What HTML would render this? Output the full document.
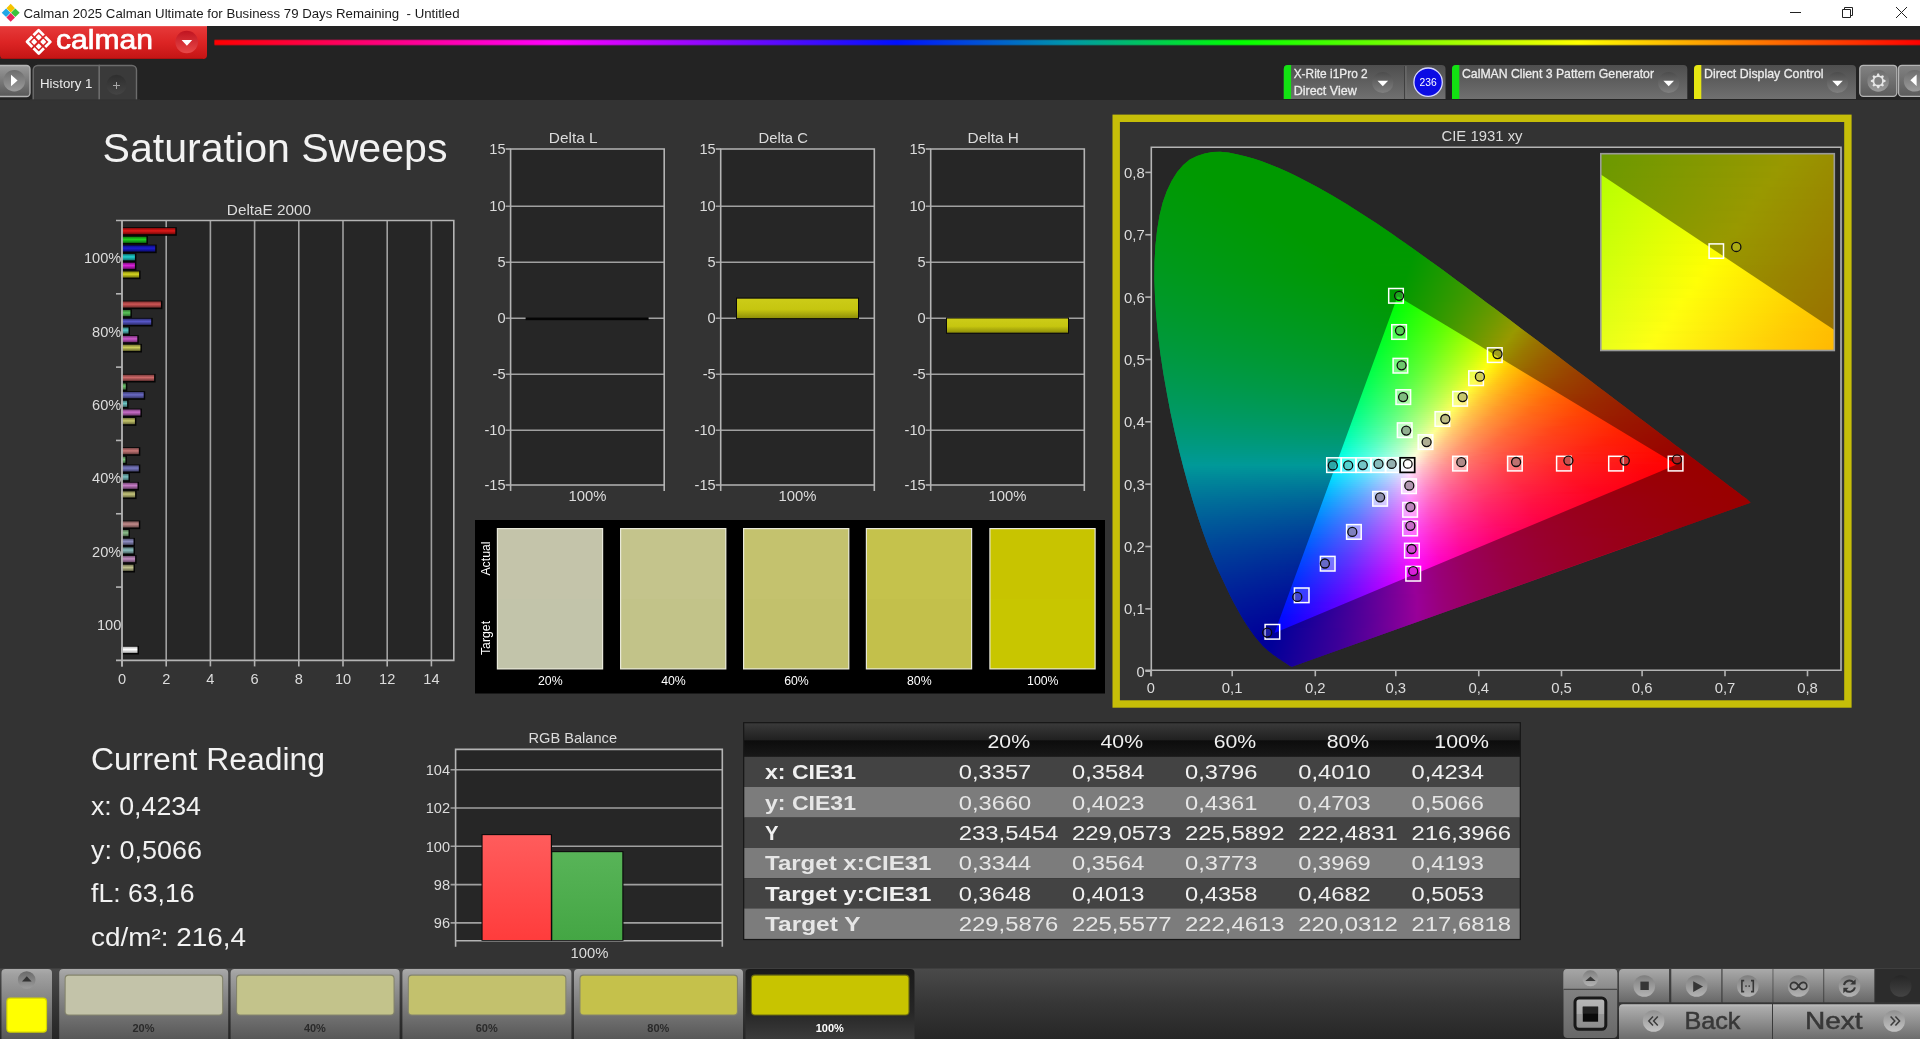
<!DOCTYPE html>
<html><head><meta charset="utf-8"><title>Calman</title>
<style>
html,body{margin:0;padding:0;background:#333;overflow:hidden}
body{width:1920px;height:1039px;position:relative;font-family:"Liberation Sans", sans-serif}
svg{position:absolute;left:0;top:0;will-change:transform}
svg text{font-family:"Liberation Sans", sans-serif}
#cie{position:absolute;overflow:hidden}
#cie i{display:block}
</style></head><body>
<svg width="1920" height="1039" viewBox="0 0 1920 1039">
<defs>
<linearGradient id="gRed" x1="0" y1="0" x2="0" y2="1"><stop offset="0" stop-color="#e63a3a"/><stop offset=".5" stop-color="#dc2424"/><stop offset="1" stop-color="#c41414"/></linearGradient>
<linearGradient id="gRain" x1="0" y1="0" x2="1" y2="0"><stop offset="0" stop-color="#ff0000"/><stop offset=".2" stop-color="#ff00ff"/><stop offset=".4" stop-color="#0010ff"/><stop offset=".5" stop-color="#0096aa"/><stop offset=".6" stop-color="#00ff00"/><stop offset=".8" stop-color="#ffff00"/><stop offset="1" stop-color="#ff0000"/></linearGradient>
<linearGradient id="gBtn" x1="0" y1="0" x2="0" y2="1"><stop offset="0" stop-color="#9a9a9a"/><stop offset="1" stop-color="#585858"/></linearGradient>
<linearGradient id="gBtn2" x1="0" y1="0" x2="0" y2="1"><stop offset="0" stop-color="#828282"/><stop offset="1" stop-color="#5c5c5c"/></linearGradient>
<linearGradient id="gCirc" x1="0" y1="0" x2="0" y2="1"><stop offset="0" stop-color="#4c4c4c"/><stop offset="1" stop-color="#808080"/></linearGradient>
<linearGradient id="gCircL" x1="0" y1="0" x2="0" y2="1"><stop offset="0" stop-color="#6c6c6c"/><stop offset="1" stop-color="#9c9c9c"/></linearGradient>
<linearGradient id="gDev" x1="0" y1="0" x2="0" y2="1"><stop offset="0" stop-color="#4e4e4e"/><stop offset="1" stop-color="#707070"/></linearGradient>
<linearGradient id="gRedC" x1="0" y1="0" x2="0" y2="1"><stop offset="0" stop-color="#c01420"/><stop offset="1" stop-color="#e84848"/></linearGradient>
<linearGradient id="gTabC" x1="0" y1="0" x2="0" y2="1"><stop offset="0" stop-color="#2e2e2e"/><stop offset="1" stop-color="#444"/></linearGradient>
</defs>
<rect x="0" y="0" width="1920" height="26" fill="#fff"/>
<rect x="0" y="26" width="1920" height="74" fill="#232323"/>
<rect x="0" y="100" width="1920" height="870" fill="#333"/>
<g transform="translate(10.7,12.8)"><path d="M0,-9 L4.3,-4.6 L0,-0.3 L-4.3,-4.6Z" fill="#f5c400"/><path d="M-9,0 L-4.6,-4.3 L-0.3,0 L-4.6,4.3Z" fill="#22a8e8"/><path d="M9,0 L4.6,-4.3 L0.3,0 L4.6,4.3Z" fill="#3cc23c"/><path d="M0,9 L4.3,4.6 L0,0.3 L-4.3,4.6Z" fill="#e8285c"/></g>
<text x="23.5" y="17.6" font-size="12.6" fill="#1a1a1a" textLength="436" lengthAdjust="spacingAndGlyphs" xml:space="preserve">Calman 2025 Calman Ultimate for Business 79 Days Remaining  - Untitled</text>
<g stroke="#222" stroke-width="1" fill="none"><path d="M1790,12.5h11"/><path d="M1842.5,9.5h8v8h-8z"/><path d="M1844.5,9.5v-2h8v8h-2"/><path d="M1896,7l11,11M1907,7l-11,11"/></g>
<path d="M0,26H207V55a4,4 0 0 1 -4,4H4a4,4 0 0 1 -4,-4Z" fill="url(#gRed)"/>
<path d="M0,58.5H203" stroke="#9a1010" stroke-width="1" opacity=".6"/>
<rect x="0" y="26" width="207" height="1" fill="#f06060" opacity=".7"/>
<g transform="translate(38.7,41.8) rotate(45)"><rect x="-5.40" y="-5.40" width="4.40" height="4.40" rx=".6" fill="#fff"/><path d="M-8.30,-0.90V-8.20H-0.90" fill="none" stroke="#fff" stroke-width="2.8" stroke-linejoin="round"/><rect x="-5.40" y="1.00" width="4.40" height="4.40" rx=".6" fill="#fff"/><path d="M-8.30,0.90V8.20H-0.90" fill="none" stroke="#fff" stroke-width="2.8" stroke-linejoin="round"/><rect x="1.00" y="-5.40" width="4.40" height="4.40" rx=".6" fill="#fff"/><path d="M8.30,-0.90V-8.20H0.90" fill="none" stroke="#fff" stroke-width="2.8" stroke-linejoin="round"/><rect x="1.00" y="1.00" width="4.40" height="4.40" rx=".6" fill="#fff"/><path d="M8.30,0.90V8.20H0.90" fill="none" stroke="#fff" stroke-width="2.8" stroke-linejoin="round"/></g>
<text x="56" y="49.2" font-size="28.5" fill="#fff" textLength="97" lengthAdjust="spacingAndGlyphs" stroke="#fff" stroke-width=".7">calman</text>
<circle cx="186.7" cy="42" r="11.3" fill="url(#gRedC)"/>
<path d="M181.6,40h10.6l-5.3,5.8z" fill="#fff"/>
<rect x="214.5" y="39.5" width="1705.5" height="6" fill="url(#gRain)" opacity=".55"/>
<rect x="214.5" y="40.3" width="1705.5" height="4.4" fill="url(#gRain)"/>
<rect x="-4" y="65.5" width="34" height="31" rx="3.5" fill="url(#gBtn)" stroke="#b4b4b4" stroke-width="1.3"/>
<circle cx="14.3" cy="80.7" r="10.8" fill="url(#gCircL)"/>
<path d="M11,74.8v11.4l6.6,-5.7z" fill="#fff"/>
<path d="M33.2,100V70a4.5,4.5 0 0 1 4.5,-4.5H99.3V100" fill="#3d3d3d" stroke="#6c6c6c" stroke-width="1.4"/>
<path d="M99.3,100V65.5H132a4.5,4.5 0 0 1 4.5,4.5V100" fill="#3a3a3a" stroke="#6c6c6c" stroke-width="1.4"/>
<rect x="30" y="99.3" width="110" height="1" fill="#333"/>
<text x="40" y="87.6" font-size="13.2" fill="#ececec" textLength="52.5" lengthAdjust="spacingAndGlyphs">History 1</text>
<circle cx="116.5" cy="84.7" r="10" fill="url(#gTabC)"/>
<path d="M113,85.5h7M116.5,82v7" stroke="#a8a8a8" stroke-width="1"/>
<path d="M1283.8,99V69a4,4 0 0 1 4,-4H1441.5a4,4 0 0 1 4,4V99Z" fill="url(#gDev)"/><path d="M1283.8,99V69a4,4 0 0 1 4,-4H1291.1V99Z" fill="#12e212"/>
<path d="M1452,99V69a4,4 0 0 1 4,-4H1683.3a4,4 0 0 1 4,4V99Z" fill="url(#gDev)"/><path d="M1452,99V69a4,4 0 0 1 4,-4H1459.3V99Z" fill="#12e212"/>
<path d="M1694,99V69a4,4 0 0 1 4,-4H1852a4,4 0 0 1 4,4V99Z" fill="url(#gDev)"/><path d="M1694,99V69a4,4 0 0 1 4,-4H1701.3V99Z" fill="#e6e612"/>
<circle cx="1382.8" cy="82.5" r="10.6" fill="url(#gCirc)"/><path d="M1377.5,80.7h10.6l-5.3,5.6z" fill="#fff"/>
<circle cx="1668.7" cy="82.5" r="10.6" fill="url(#gCirc)"/><path d="M1663.4,80.7h10.6l-5.3,5.6z" fill="#fff"/>
<circle cx="1837.5" cy="82.5" r="10.6" fill="url(#gCirc)"/><path d="M1832.2,80.7h10.6l-5.3,5.6z" fill="#fff"/>
<line x1="1404.7" y1="66" x2="1404.7" y2="99" stroke="#3c3c3c" stroke-width="1.2"/>
<line x1="1405.9" y1="66" x2="1405.9" y2="99" stroke="#777" stroke-width="1"/>
<circle cx="1428.1" cy="82.2" r="14.2" fill="#0b0be4" stroke="#d8d8ff" stroke-width="1.3"/>
<text x="1428.1" y="86" font-size="10.5" fill="#fff" text-anchor="middle" textLength="17.2" lengthAdjust="spacingAndGlyphs">236</text>
<text x="1293.7" y="77.9" font-size="13" fill="#ececec" textLength="74" lengthAdjust="spacingAndGlyphs" stroke="#ececec" stroke-width=".3">X-Rite i1Pro 2</text>
<text x="1293.7" y="94.5" font-size="13" fill="#ececec" textLength="63" lengthAdjust="spacingAndGlyphs" stroke="#ececec" stroke-width=".3">Direct View</text>
<text x="1462" y="77.9" font-size="13" fill="#ececec" textLength="192" lengthAdjust="spacingAndGlyphs" stroke="#ececec" stroke-width=".3">CalMAN Client 3 Pattern Generator</text>
<text x="1704" y="77.9" font-size="13" fill="#ececec" textLength="119.5" lengthAdjust="spacingAndGlyphs" stroke="#ececec" stroke-width=".3">Direct Display Control</text>
<rect x="1859.8" y="65.3" width="37" height="31" rx="3.5" fill="url(#gBtn2)" stroke="#b4b4b4" stroke-width="1.3"/>
<circle cx="1878.2" cy="80.9" r="10.8" fill="url(#gCircL)"/>
<polygon points="1885.56,80.17 1885.56,81.63 1883.46,82.50 1883.05,83.49 1883.92,85.59 1882.89,86.62 1880.79,85.75 1879.80,86.16 1878.93,88.26 1877.47,88.26 1876.60,86.16 1875.61,85.75 1873.51,86.62 1872.48,85.59 1873.35,83.49 1872.94,82.50 1870.84,81.63 1870.84,80.17 1872.94,79.30 1873.35,78.31 1872.48,76.21 1873.51,75.18 1875.61,76.05 1876.60,75.64 1877.47,73.54 1878.93,73.54 1879.80,75.64 1880.79,76.05 1882.89,75.18 1883.92,76.21 1883.05,78.31 1883.46,79.30" fill="#e6e6e6"/>
<circle cx="1878.2" cy="80.9" r="3.9" fill="#808080"/>
<circle cx="1878.2" cy="80.9" r="3.9" fill="none" stroke="#666" stroke-width="1" opacity=".0"/>
<rect x="1898.5" y="65.3" width="30" height="31" rx="3.5" fill="url(#gBtn2)" stroke="#b4b4b4" stroke-width="1.3"/>
<circle cx="1914.6" cy="80.8" r="10.8" fill="url(#gCircL)"/>
<path d="M1916.6,74.6v11.4l-6.2,-5.7z" fill="#fff"/>
<defs><linearGradient id="b00" x1="0" y1="0" x2="0" y2="1"><stop offset="0" stop-color="#850909"/><stop offset=".45" stop-color="#df1818"/><stop offset="1" stop-color="#760808"/></linearGradient><linearGradient id="b01" x1="0" y1="0" x2="0" y2="1"><stop offset="0" stop-color="#0e7c0e"/><stop offset=".45" stop-color="#20d020"/><stop offset="1" stop-color="#0d6e0d"/></linearGradient><linearGradient id="b02" x1="0" y1="0" x2="0" y2="1"><stop offset="0" stop-color="#0c0c7c"/><stop offset=".45" stop-color="#1c1cd0"/><stop offset="1" stop-color="#0b0b6e"/></linearGradient><linearGradient id="b03" x1="0" y1="0" x2="0" y2="1"><stop offset="0" stop-color="#0e7c7c"/><stop offset=".45" stop-color="#20d0d0"/><stop offset="1" stop-color="#0d6e6e"/></linearGradient><linearGradient id="b04" x1="0" y1="0" x2="0" y2="1"><stop offset="0" stop-color="#800e80"/><stop offset=".45" stop-color="#d820d8"/><stop offset="1" stop-color="#720d72"/></linearGradient><linearGradient id="b05" x1="0" y1="0" x2="0" y2="1"><stop offset="0" stop-color="#7f7f0e"/><stop offset=".45" stop-color="#d6d620"/><stop offset="1" stop-color="#71710d"/></linearGradient><linearGradient id="b10" x1="0" y1="0" x2="0" y2="1"><stop offset="0" stop-color="#7c2f2f"/><stop offset=".45" stop-color="#d05555"/><stop offset="1" stop-color="#6e2a2a"/></linearGradient><linearGradient id="b11" x1="0" y1="0" x2="0" y2="1"><stop offset="0" stop-color="#327632"/><stop offset=".45" stop-color="#5ac75a"/><stop offset="1" stop-color="#2d692d"/></linearGradient><linearGradient id="b12" x1="0" y1="0" x2="0" y2="1"><stop offset="0" stop-color="#303076"/><stop offset=".45" stop-color="#5757c7"/><stop offset="1" stop-color="#2b2b69"/></linearGradient><linearGradient id="b13" x1="0" y1="0" x2="0" y2="1"><stop offset="0" stop-color="#327676"/><stop offset=".45" stop-color="#5ac7c7"/><stop offset="1" stop-color="#2d6969"/></linearGradient><linearGradient id="b14" x1="0" y1="0" x2="0" y2="1"><stop offset="0" stop-color="#793279"/><stop offset=".45" stop-color="#cc5acc"/><stop offset="1" stop-color="#6b2d6b"/></linearGradient><linearGradient id="b15" x1="0" y1="0" x2="0" y2="1"><stop offset="0" stop-color="#787832"/><stop offset=".45" stop-color="#cbcb5a"/><stop offset="1" stop-color="#6b6b2d"/></linearGradient><linearGradient id="b20" x1="0" y1="0" x2="0" y2="1"><stop offset="0" stop-color="#793b3b"/><stop offset=".45" stop-color="#cc6868"/><stop offset="1" stop-color="#6b3434"/></linearGradient><linearGradient id="b21" x1="0" y1="0" x2="0" y2="1"><stop offset="0" stop-color="#3e743e"/><stop offset=".45" stop-color="#6cc46c"/><stop offset="1" stop-color="#376737"/></linearGradient><linearGradient id="b22" x1="0" y1="0" x2="0" y2="1"><stop offset="0" stop-color="#3c3c74"/><stop offset=".45" stop-color="#6a6ac4"/><stop offset="1" stop-color="#353567"/></linearGradient><linearGradient id="b23" x1="0" y1="0" x2="0" y2="1"><stop offset="0" stop-color="#3e7474"/><stop offset=".45" stop-color="#6cc4c4"/><stop offset="1" stop-color="#376767"/></linearGradient><linearGradient id="b24" x1="0" y1="0" x2="0" y2="1"><stop offset="0" stop-color="#773e77"/><stop offset=".45" stop-color="#c86cc8"/><stop offset="1" stop-color="#693769"/></linearGradient><linearGradient id="b25" x1="0" y1="0" x2="0" y2="1"><stop offset="0" stop-color="#76763e"/><stop offset=".45" stop-color="#c7c76c"/><stop offset="1" stop-color="#696937"/></linearGradient><linearGradient id="b30" x1="0" y1="0" x2="0" y2="1"><stop offset="0" stop-color="#774545"/><stop offset=".45" stop-color="#c87878"/><stop offset="1" stop-color="#693d3d"/></linearGradient><linearGradient id="b31" x1="0" y1="0" x2="0" y2="1"><stop offset="0" stop-color="#477347"/><stop offset=".45" stop-color="#7bc27b"/><stop offset="1" stop-color="#3f663f"/></linearGradient><linearGradient id="b32" x1="0" y1="0" x2="0" y2="1"><stop offset="0" stop-color="#464673"/><stop offset=".45" stop-color="#7a7ac2"/><stop offset="1" stop-color="#3e3e66"/></linearGradient><linearGradient id="b33" x1="0" y1="0" x2="0" y2="1"><stop offset="0" stop-color="#477373"/><stop offset=".45" stop-color="#7bc2c2"/><stop offset="1" stop-color="#3f6666"/></linearGradient><linearGradient id="b34" x1="0" y1="0" x2="0" y2="1"><stop offset="0" stop-color="#754775"/><stop offset=".45" stop-color="#c57bc5"/><stop offset="1" stop-color="#673f67"/></linearGradient><linearGradient id="b35" x1="0" y1="0" x2="0" y2="1"><stop offset="0" stop-color="#747447"/><stop offset=".45" stop-color="#c4c47b"/><stop offset="1" stop-color="#67673f"/></linearGradient><linearGradient id="b40" x1="0" y1="0" x2="0" y2="1"><stop offset="0" stop-color="#735151"/><stop offset=".45" stop-color="#c38b8b"/><stop offset="1" stop-color="#664848"/></linearGradient><linearGradient id="b41" x1="0" y1="0" x2="0" y2="1"><stop offset="0" stop-color="#527152"/><stop offset=".45" stop-color="#8dbf8d"/><stop offset="1" stop-color="#496449"/></linearGradient><linearGradient id="b42" x1="0" y1="0" x2="0" y2="1"><stop offset="0" stop-color="#515171"/><stop offset=".45" stop-color="#8c8cbf"/><stop offset="1" stop-color="#484864"/></linearGradient><linearGradient id="b43" x1="0" y1="0" x2="0" y2="1"><stop offset="0" stop-color="#527171"/><stop offset=".45" stop-color="#8dbfbf"/><stop offset="1" stop-color="#496464"/></linearGradient><linearGradient id="b44" x1="0" y1="0" x2="0" y2="1"><stop offset="0" stop-color="#725272"/><stop offset=".45" stop-color="#c18dc1"/><stop offset="1" stop-color="#654965"/></linearGradient><linearGradient id="b45" x1="0" y1="0" x2="0" y2="1"><stop offset="0" stop-color="#727252"/><stop offset=".45" stop-color="#c0c08d"/><stop offset="1" stop-color="#656549"/></linearGradient><linearGradient id="bw" x1="0" y1="0" x2="0" y2="1"><stop offset="0" stop-color="#bbb"/><stop offset=".45" stop-color="#fff"/><stop offset="1" stop-color="#aaa"/></linearGradient></defs><rect x="122.0" y="220.5" width="331.8" height="439.9" fill="#262626"/>
<line x1="166.2" y1="220.5" x2="166.2" y2="660.4" stroke="#a0a0a0" stroke-width="1.6"/>
<line x1="210.4" y1="220.5" x2="210.4" y2="660.4" stroke="#a0a0a0" stroke-width="1.6"/>
<line x1="254.60000000000002" y1="220.5" x2="254.60000000000002" y2="660.4" stroke="#a0a0a0" stroke-width="1.6"/>
<line x1="298.8" y1="220.5" x2="298.8" y2="660.4" stroke="#a0a0a0" stroke-width="1.6"/>
<line x1="343.0" y1="220.5" x2="343.0" y2="660.4" stroke="#a0a0a0" stroke-width="1.6"/>
<line x1="387.20000000000005" y1="220.5" x2="387.20000000000005" y2="660.4" stroke="#a0a0a0" stroke-width="1.6"/>
<line x1="431.40000000000003" y1="220.5" x2="431.40000000000003" y2="660.4" stroke="#a0a0a0" stroke-width="1.6"/>
<path d="M116.0,220.5H453.8V660.4H116.0" fill="none" stroke="#b4b4b4" stroke-width="1.6"/>
<line x1="116.0" y1="293.81666666666666" x2="122.0" y2="293.81666666666666" stroke="#b4b4b4" stroke-width="1.6"/>
<line x1="116.0" y1="367.1333333333333" x2="122.0" y2="367.1333333333333" stroke="#b4b4b4" stroke-width="1.6"/>
<line x1="116.0" y1="440.45" x2="122.0" y2="440.45" stroke="#b4b4b4" stroke-width="1.6"/>
<line x1="116.0" y1="513.7666666666667" x2="122.0" y2="513.7666666666667" stroke="#b4b4b4" stroke-width="1.6"/>
<line x1="116.0" y1="587.0833333333333" x2="122.0" y2="587.0833333333333" stroke="#b4b4b4" stroke-width="1.6"/>
<line x1="122.0" y1="660.4" x2="122.0" y2="666.4" stroke="#b4b4b4" stroke-width="1.6"/>
<text x="122.0" y="683.6" font-size="14.6" fill="#dcdcdc" text-anchor="middle">0</text>
<line x1="166.2" y1="660.4" x2="166.2" y2="666.4" stroke="#b4b4b4" stroke-width="1.6"/>
<text x="166.2" y="683.6" font-size="14.6" fill="#dcdcdc" text-anchor="middle">2</text>
<line x1="210.4" y1="660.4" x2="210.4" y2="666.4" stroke="#b4b4b4" stroke-width="1.6"/>
<text x="210.4" y="683.6" font-size="14.6" fill="#dcdcdc" text-anchor="middle">4</text>
<line x1="254.60000000000002" y1="660.4" x2="254.60000000000002" y2="666.4" stroke="#b4b4b4" stroke-width="1.6"/>
<text x="254.60000000000002" y="683.6" font-size="14.6" fill="#dcdcdc" text-anchor="middle">6</text>
<line x1="298.8" y1="660.4" x2="298.8" y2="666.4" stroke="#b4b4b4" stroke-width="1.6"/>
<text x="298.8" y="683.6" font-size="14.6" fill="#dcdcdc" text-anchor="middle">8</text>
<line x1="343.0" y1="660.4" x2="343.0" y2="666.4" stroke="#b4b4b4" stroke-width="1.6"/>
<text x="343.0" y="683.6" font-size="14.6" fill="#dcdcdc" text-anchor="middle">10</text>
<line x1="387.20000000000005" y1="660.4" x2="387.20000000000005" y2="666.4" stroke="#b4b4b4" stroke-width="1.6"/>
<text x="387.20000000000005" y="683.6" font-size="14.6" fill="#dcdcdc" text-anchor="middle">12</text>
<line x1="431.40000000000003" y1="660.4" x2="431.40000000000003" y2="666.4" stroke="#b4b4b4" stroke-width="1.6"/>
<text x="431.40000000000003" y="683.6" font-size="14.6" fill="#dcdcdc" text-anchor="middle">14</text>
<text x="269" y="214.9" font-size="14.6" fill="#dcdcdc" text-anchor="middle" textLength="84.3" lengthAdjust="spacingAndGlyphs">DeltaE 2000</text>
<text x="121.3" y="263.3583333333333" font-size="14.6" fill="#dcdcdc" text-anchor="end">100%</text>
<rect x="121.5" y="227.2" width="55.3" height="8.6" fill="#050505"/>
<rect x="121.0" y="228.0" width="54.3" height="6.2" fill="url(#b00)"/>
<rect x="121.5" y="235.9" width="26.4" height="8.6" fill="#050505"/>
<rect x="121.0" y="236.7" width="25.4" height="6.2" fill="url(#b01)"/>
<rect x="121.5" y="244.6" width="35.2" height="8.6" fill="#050505"/>
<rect x="121.0" y="245.4" width="34.2" height="6.2" fill="url(#b02)"/>
<rect x="121.5" y="253.3" width="14.9" height="8.6" fill="#050505"/>
<rect x="121.0" y="254.1" width="13.9" height="6.2" fill="url(#b03)"/>
<rect x="121.5" y="261.9" width="14.9" height="8.6" fill="#050505"/>
<rect x="121.0" y="262.7" width="13.9" height="6.2" fill="url(#b04)"/>
<rect x="121.5" y="270.6" width="19.1" height="8.6" fill="#050505"/>
<rect x="121.0" y="271.4" width="18.1" height="6.2" fill="url(#b05)"/>
<text x="121.3" y="336.675" font-size="14.6" fill="#dcdcdc" text-anchor="end">80%</text>
<rect x="121.5" y="300.6" width="40.9" height="8.6" fill="#050505"/>
<rect x="121.0" y="301.4" width="39.9" height="6.2" fill="url(#b10)"/>
<rect x="121.5" y="309.2" width="10.4" height="8.6" fill="#050505"/>
<rect x="121.0" y="310.0" width="9.4" height="6.2" fill="url(#b11)"/>
<rect x="121.5" y="317.9" width="31.2" height="8.6" fill="#050505"/>
<rect x="121.0" y="318.7" width="30.2" height="6.2" fill="url(#b12)"/>
<rect x="121.5" y="326.6" width="8.5" height="8.6" fill="#050505"/>
<rect x="121.0" y="327.4" width="7.5" height="6.2" fill="url(#b13)"/>
<rect x="121.5" y="335.2" width="17.3" height="8.6" fill="#050505"/>
<rect x="121.0" y="336.0" width="16.3" height="6.2" fill="url(#b14)"/>
<rect x="121.5" y="343.9" width="20.4" height="8.6" fill="#050505"/>
<rect x="121.0" y="344.7" width="19.4" height="6.2" fill="url(#b15)"/>
<text x="121.3" y="409.9916666666666" font-size="14.6" fill="#dcdcdc" text-anchor="end">60%</text>
<rect x="121.5" y="373.9" width="34.1" height="8.6" fill="#050505"/>
<rect x="121.0" y="374.7" width="33.1" height="6.2" fill="url(#b20)"/>
<rect x="121.5" y="382.6" width="5.8" height="8.6" fill="#050505"/>
<rect x="121.0" y="383.4" width="4.8" height="6.2" fill="url(#b21)"/>
<rect x="121.5" y="391.2" width="23.7" height="8.6" fill="#050505"/>
<rect x="121.0" y="392.0" width="22.7" height="6.2" fill="url(#b22)"/>
<rect x="121.5" y="399.9" width="7.1" height="8.6" fill="#050505"/>
<rect x="121.0" y="400.7" width="6.1" height="6.2" fill="url(#b23)"/>
<rect x="121.5" y="408.6" width="20.4" height="8.6" fill="#050505"/>
<rect x="121.0" y="409.4" width="19.4" height="6.2" fill="url(#b24)"/>
<rect x="121.5" y="417.2" width="14.9" height="8.6" fill="#050505"/>
<rect x="121.0" y="418.0" width="13.9" height="6.2" fill="url(#b25)"/>
<text x="121.3" y="483.30833333333334" font-size="14.6" fill="#dcdcdc" text-anchor="end">40%</text>
<rect x="121.5" y="447.2" width="18.8" height="8.6" fill="#050505"/>
<rect x="121.0" y="448.0" width="17.8" height="6.2" fill="url(#b30)"/>
<rect x="121.5" y="455.9" width="5.4" height="8.6" fill="#050505"/>
<rect x="121.0" y="456.7" width="4.4" height="6.2" fill="url(#b31)"/>
<rect x="121.5" y="464.5" width="18.8" height="8.6" fill="#050505"/>
<rect x="121.0" y="465.3" width="17.8" height="6.2" fill="url(#b32)"/>
<rect x="121.5" y="473.2" width="8.5" height="8.6" fill="#050505"/>
<rect x="121.0" y="474.0" width="7.5" height="6.2" fill="url(#b33)"/>
<rect x="121.5" y="481.9" width="17.5" height="8.6" fill="#050505"/>
<rect x="121.0" y="482.7" width="16.5" height="6.2" fill="url(#b34)"/>
<rect x="121.5" y="490.5" width="15.1" height="8.6" fill="#050505"/>
<rect x="121.0" y="491.3" width="14.1" height="6.2" fill="url(#b35)"/>
<text x="121.3" y="556.625" font-size="14.6" fill="#dcdcdc" text-anchor="end">20%</text>
<rect x="121.5" y="520.5" width="18.8" height="8.6" fill="#050505"/>
<rect x="121.0" y="521.3" width="17.8" height="6.2" fill="url(#b40)"/>
<rect x="121.5" y="529.2" width="8.5" height="8.6" fill="#050505"/>
<rect x="121.0" y="530.0" width="7.5" height="6.2" fill="url(#b41)"/>
<rect x="121.5" y="537.9" width="13.5" height="8.6" fill="#050505"/>
<rect x="121.0" y="538.7" width="12.5" height="6.2" fill="url(#b42)"/>
<rect x="121.5" y="546.5" width="13.5" height="8.6" fill="#050505"/>
<rect x="121.0" y="547.3" width="12.5" height="6.2" fill="url(#b43)"/>
<rect x="121.5" y="555.2" width="15.1" height="8.6" fill="#050505"/>
<rect x="121.0" y="556.0" width="14.1" height="6.2" fill="url(#b44)"/>
<rect x="121.5" y="563.9" width="13.5" height="8.6" fill="#050505"/>
<rect x="121.0" y="564.7" width="12.5" height="6.2" fill="url(#b45)"/>
<text x="121.3" y="629.9416666666667" font-size="14.6" fill="#dcdcdc" text-anchor="end">100</text>
<rect x="121.5" y="645.9" width="17.5" height="8.6" fill="#050505"/>
<rect x="121.0" y="646.7" width="16.5" height="6.2" fill="url(#bw)"/>
<line x1="122.0" y1="220.5" x2="122.0" y2="666.4" stroke="#b4b4b4" stroke-width="1.8"/>
<text x="102.5" y="161.5" font-size="41.5" fill="#f2f2f2" textLength="345" lengthAdjust="spacingAndGlyphs">Saturation Sweeps</text>
<text x="91" y="770" font-size="31" fill="#f2f2f2" textLength="234" lengthAdjust="spacingAndGlyphs">Current Reading</text>
<text x="91" y="815.3" font-size="25.5" fill="#f2f2f2" textLength="110" lengthAdjust="spacingAndGlyphs">x: 0,4234</text>
<text x="91" y="858.8" font-size="25.5" fill="#f2f2f2" textLength="111" lengthAdjust="spacingAndGlyphs">y: 0,5066</text>
<text x="91" y="901.8" font-size="25.5" fill="#f2f2f2" textLength="103.5" lengthAdjust="spacingAndGlyphs">fL: 63,16</text>
<text x="91" y="946.3" font-size="25.5" fill="#f2f2f2" textLength="155" lengthAdjust="spacingAndGlyphs">cd/m²: 216,4</text>
<defs><linearGradient id="rbR" x1="0" y1="0" x2="0" y2="1"><stop offset="0" stop-color="#ff5c5c"/><stop offset="1" stop-color="#ff3c3c"/></linearGradient><linearGradient id="rbG" x1="0" y1="0" x2="0" y2="1"><stop offset="0" stop-color="#58b458"/><stop offset="1" stop-color="#44a644"/></linearGradient></defs>
<rect x="455.6" y="749.4" width="266.69999999999993" height="191.39999999999998" fill="#262626"/>
<line x1="450.6" y1="922.86" x2="722.3" y2="922.86" stroke="#a0a0a0" stroke-width="1.6"/>
<text x="450.1" y="928.0600000000001" font-size="14.6" fill="#dcdcdc" text-anchor="end">96</text>
<line x1="450.6" y1="884.58" x2="722.3" y2="884.58" stroke="#a0a0a0" stroke-width="1.6"/>
<text x="450.1" y="889.7800000000001" font-size="14.6" fill="#dcdcdc" text-anchor="end">98</text>
<line x1="450.6" y1="846.3" x2="722.3" y2="846.3" stroke="#a0a0a0" stroke-width="1.6"/>
<text x="450.1" y="851.5" font-size="14.6" fill="#dcdcdc" text-anchor="end">100</text>
<line x1="450.6" y1="808.02" x2="722.3" y2="808.02" stroke="#a0a0a0" stroke-width="1.6"/>
<text x="450.1" y="813.22" font-size="14.6" fill="#dcdcdc" text-anchor="end">102</text>
<line x1="450.6" y1="769.74" x2="722.3" y2="769.74" stroke="#a0a0a0" stroke-width="1.6"/>
<text x="450.1" y="774.94" font-size="14.6" fill="#dcdcdc" text-anchor="end">104</text>
<path d="M455.6,946.8V749.4H722.3V946.8" fill="none" stroke="#b4b4b4" stroke-width="1.6"/>
<line x1="455.6" y1="940.8" x2="722.3" y2="940.8" stroke="#b4b4b4" stroke-width="1.6"/>
<rect x="481.5" y="834.1472" width="70.5" height="106.65279999999996" fill="#0a0a0a"/>
<rect x="551" y="851.1818000000001" width="72.5" height="89.61819999999989" fill="#0a0a0a"/>
<rect x="482.6" y="835.1472" width="68.2" height="104.85279999999996" fill="url(#rbR)"/>
<rect x="552.3" y="852.1818000000001" width="70" height="87.81819999999989" fill="url(#rbG)"/>
<text x="572.8" y="743.4" font-size="14.6" fill="#dcdcdc" text-anchor="middle" textLength="88.5" lengthAdjust="spacingAndGlyphs">RGB Balance</text>
<text x="589.5" y="957.8" font-size="14.6" fill="#dcdcdc" text-anchor="middle" textLength="38" lengthAdjust="spacingAndGlyphs">100%</text>
<defs><linearGradient id="tbH" x1="0" y1="0" x2="0" y2="1"><stop offset="0" stop-color="#3a3a3a"/><stop offset=".5" stop-color="#202020"/><stop offset=".52" stop-color="#0c0c0c"/><stop offset="1" stop-color="#181818"/></linearGradient></defs>
<rect x="743.0999999999999" y="722.0999999999999" width="777.8000000000001" height="218.00000000000003" fill="#161616"/>
<rect x="744.3" y="723.3" width="775.4000000000001" height="33.5" fill="url(#tbH)"/>
<rect x="744.3" y="756.8" width="775.4000000000001" height="30.200000000000045" fill="#434343"/>
<rect x="744.3" y="787" width="775.4000000000001" height="30.600000000000023" fill="#7c7c7c"/>
<rect x="744.3" y="817.6" width="775.4000000000001" height="30.399999999999977" fill="#434343"/>
<rect x="744.3" y="848" width="775.4000000000001" height="30.200000000000045" fill="#7c7c7c"/>
<rect x="744.3" y="878.2" width="775.4000000000001" height="30.199999999999932" fill="#434343"/>
<rect x="744.3" y="908.4" width="775.4000000000001" height="30.5" fill="#7c7c7c"/>
<text x="1008.8" y="748.3" font-size="18.5" fill="#f0f0f0" text-anchor="middle" textLength="42.5" lengthAdjust="spacingAndGlyphs">20%</text>
<text x="1121.8" y="748.3" font-size="18.5" fill="#f0f0f0" text-anchor="middle" textLength="42.5" lengthAdjust="spacingAndGlyphs">40%</text>
<text x="1235" y="748.3" font-size="18.5" fill="#f0f0f0" text-anchor="middle" textLength="42.5" lengthAdjust="spacingAndGlyphs">60%</text>
<text x="1348" y="748.3" font-size="18.5" fill="#f0f0f0" text-anchor="middle" textLength="42.5" lengthAdjust="spacingAndGlyphs">80%</text>
<text x="1461.6" y="748.3" font-size="18.5" fill="#f0f0f0" text-anchor="middle" textLength="54.5" lengthAdjust="spacingAndGlyphs">100%</text>
<text x="765" y="779.1" font-size="19.5" fill="#f0f0f0" font-weight="bold" textLength="91" lengthAdjust="spacingAndGlyphs">x: CIE31</text>
<text x="958.8" y="779.1" font-size="19.5" fill="#f0f0f0" textLength="72.5" lengthAdjust="spacingAndGlyphs">0,3357</text>
<text x="1072" y="779.1" font-size="19.5" fill="#f0f0f0" textLength="72.5" lengthAdjust="spacingAndGlyphs">0,3584</text>
<text x="1185" y="779.1" font-size="19.5" fill="#f0f0f0" textLength="72.5" lengthAdjust="spacingAndGlyphs">0,3796</text>
<text x="1298.3" y="779.1" font-size="19.5" fill="#f0f0f0" textLength="72.5" lengthAdjust="spacingAndGlyphs">0,4010</text>
<text x="1411.5" y="779.1" font-size="19.5" fill="#f0f0f0" textLength="72.5" lengthAdjust="spacingAndGlyphs">0,4234</text>
<text x="765" y="809.5" font-size="19.5" fill="#e6e6e6" font-weight="bold" textLength="91" lengthAdjust="spacingAndGlyphs">y: CIE31</text>
<text x="958.8" y="809.5" font-size="19.5" fill="#e6e6e6" textLength="72.5" lengthAdjust="spacingAndGlyphs">0,3660</text>
<text x="1072" y="809.5" font-size="19.5" fill="#e6e6e6" textLength="72.5" lengthAdjust="spacingAndGlyphs">0,4023</text>
<text x="1185" y="809.5" font-size="19.5" fill="#e6e6e6" textLength="72.5" lengthAdjust="spacingAndGlyphs">0,4361</text>
<text x="1298.3" y="809.5" font-size="19.5" fill="#e6e6e6" textLength="72.5" lengthAdjust="spacingAndGlyphs">0,4703</text>
<text x="1411.5" y="809.5" font-size="19.5" fill="#e6e6e6" textLength="72.5" lengthAdjust="spacingAndGlyphs">0,5066</text>
<text x="765" y="840.0" font-size="19.5" fill="#f0f0f0" font-weight="bold" textLength="13.5" lengthAdjust="spacingAndGlyphs">Y</text>
<text x="958.8" y="840.0" font-size="19.5" fill="#f0f0f0" textLength="99.5" lengthAdjust="spacingAndGlyphs">233,5454</text>
<text x="1072" y="840.0" font-size="19.5" fill="#f0f0f0" textLength="99.5" lengthAdjust="spacingAndGlyphs">229,0573</text>
<text x="1185" y="840.0" font-size="19.5" fill="#f0f0f0" textLength="99.5" lengthAdjust="spacingAndGlyphs">225,5892</text>
<text x="1298.3" y="840.0" font-size="19.5" fill="#f0f0f0" textLength="99.5" lengthAdjust="spacingAndGlyphs">222,4831</text>
<text x="1411.5" y="840.0" font-size="19.5" fill="#f0f0f0" textLength="99.5" lengthAdjust="spacingAndGlyphs">216,3966</text>
<text x="765" y="870.3000000000001" font-size="19.5" fill="#e6e6e6" font-weight="bold" textLength="166.5" lengthAdjust="spacingAndGlyphs">Target x:CIE31</text>
<text x="958.8" y="870.3000000000001" font-size="19.5" fill="#e6e6e6" textLength="72.5" lengthAdjust="spacingAndGlyphs">0,3344</text>
<text x="1072" y="870.3000000000001" font-size="19.5" fill="#e6e6e6" textLength="72.5" lengthAdjust="spacingAndGlyphs">0,3564</text>
<text x="1185" y="870.3000000000001" font-size="19.5" fill="#e6e6e6" textLength="72.5" lengthAdjust="spacingAndGlyphs">0,3773</text>
<text x="1298.3" y="870.3000000000001" font-size="19.5" fill="#e6e6e6" textLength="72.5" lengthAdjust="spacingAndGlyphs">0,3969</text>
<text x="1411.5" y="870.3000000000001" font-size="19.5" fill="#e6e6e6" textLength="72.5" lengthAdjust="spacingAndGlyphs">0,4193</text>
<text x="765" y="900.5" font-size="19.5" fill="#f0f0f0" font-weight="bold" textLength="166.5" lengthAdjust="spacingAndGlyphs">Target y:CIE31</text>
<text x="958.8" y="900.5" font-size="19.5" fill="#f0f0f0" textLength="72.5" lengthAdjust="spacingAndGlyphs">0,3648</text>
<text x="1072" y="900.5" font-size="19.5" fill="#f0f0f0" textLength="72.5" lengthAdjust="spacingAndGlyphs">0,4013</text>
<text x="1185" y="900.5" font-size="19.5" fill="#f0f0f0" textLength="72.5" lengthAdjust="spacingAndGlyphs">0,4358</text>
<text x="1298.3" y="900.5" font-size="19.5" fill="#f0f0f0" textLength="72.5" lengthAdjust="spacingAndGlyphs">0,4682</text>
<text x="1411.5" y="900.5" font-size="19.5" fill="#f0f0f0" textLength="72.5" lengthAdjust="spacingAndGlyphs">0,5053</text>
<text x="765" y="930.85" font-size="19.5" fill="#e6e6e6" font-weight="bold" textLength="95.5" lengthAdjust="spacingAndGlyphs">Target Y</text>
<text x="958.8" y="930.85" font-size="19.5" fill="#e6e6e6" textLength="99.5" lengthAdjust="spacingAndGlyphs">229,5876</text>
<text x="1072" y="930.85" font-size="19.5" fill="#e6e6e6" textLength="99.5" lengthAdjust="spacingAndGlyphs">225,5577</text>
<text x="1185" y="930.85" font-size="19.5" fill="#e6e6e6" textLength="99.5" lengthAdjust="spacingAndGlyphs">222,4613</text>
<text x="1298.3" y="930.85" font-size="19.5" fill="#e6e6e6" textLength="99.5" lengthAdjust="spacingAndGlyphs">220,0312</text>
<text x="1411.5" y="930.85" font-size="19.5" fill="#e6e6e6" textLength="99.5" lengthAdjust="spacingAndGlyphs">217,6818</text>
<defs><linearGradient id="dY" x1="0" y1="0" x2="0" y2="1"><stop offset="0" stop-color="#cccc18"/><stop offset=".55" stop-color="#c6c610"/><stop offset="1" stop-color="#8e8e08"/></linearGradient></defs>
<rect x="510.6" y="149.0" width="153.60000000000002" height="336.0" fill="#262626"/>
<line x1="505.6" y1="149.0" x2="510.6" y2="149.0" stroke="#b4b4b4" stroke-width="1.6"/>
<text x="505.6" y="154.2" font-size="14.6" fill="#dcdcdc" text-anchor="end">15</text>
<line x1="505.6" y1="206.2" x2="664.2" y2="206.2" stroke="#a0a0a0" stroke-width="1.6"/>
<text x="505.6" y="211.39999999999998" font-size="14.6" fill="#dcdcdc" text-anchor="end">10</text>
<line x1="505.6" y1="262.2" x2="664.2" y2="262.2" stroke="#a0a0a0" stroke-width="1.6"/>
<text x="505.6" y="267.4" font-size="14.6" fill="#dcdcdc" text-anchor="end">5</text>
<line x1="505.6" y1="318.2" x2="664.2" y2="318.2" stroke="#a0a0a0" stroke-width="1.6"/>
<text x="505.6" y="323.4" font-size="14.6" fill="#dcdcdc" text-anchor="end">0</text>
<line x1="505.6" y1="374.2" x2="664.2" y2="374.2" stroke="#a0a0a0" stroke-width="1.6"/>
<text x="505.6" y="379.4" font-size="14.6" fill="#dcdcdc" text-anchor="end">-5</text>
<line x1="505.6" y1="430.2" x2="664.2" y2="430.2" stroke="#a0a0a0" stroke-width="1.6"/>
<text x="505.6" y="435.4" font-size="14.6" fill="#dcdcdc" text-anchor="end">-10</text>
<line x1="505.6" y1="485.0" x2="510.6" y2="485.0" stroke="#b4b4b4" stroke-width="1.6"/>
<text x="505.6" y="490.2" font-size="14.6" fill="#dcdcdc" text-anchor="end">-15</text>
<path d="M510.6,491.0V149.0H664.2V491.0" fill="none" stroke="#b4b4b4" stroke-width="1.6"/>
<line x1="510.6" y1="485.0" x2="664.2" y2="485.0" stroke="#b4b4b4" stroke-width="1.6"/>
<rect x="525.6" y="317.2" width="123" height="3" fill="#050505"/>
<text x="573.2" y="142.6" font-size="14.6" fill="#dcdcdc" text-anchor="middle" textLength="48.8" lengthAdjust="spacingAndGlyphs">Delta L</text>
<text x="587.4000000000001" y="501.3" font-size="14.6" fill="#dcdcdc" text-anchor="middle" textLength="38" lengthAdjust="spacingAndGlyphs">100%</text>
<rect x="720.7" y="149.0" width="153.60000000000002" height="336.0" fill="#262626"/>
<line x1="715.7" y1="149.0" x2="720.7" y2="149.0" stroke="#b4b4b4" stroke-width="1.6"/>
<text x="715.7" y="154.2" font-size="14.6" fill="#dcdcdc" text-anchor="end">15</text>
<line x1="715.7" y1="206.2" x2="874.3000000000001" y2="206.2" stroke="#a0a0a0" stroke-width="1.6"/>
<text x="715.7" y="211.39999999999998" font-size="14.6" fill="#dcdcdc" text-anchor="end">10</text>
<line x1="715.7" y1="262.2" x2="874.3000000000001" y2="262.2" stroke="#a0a0a0" stroke-width="1.6"/>
<text x="715.7" y="267.4" font-size="14.6" fill="#dcdcdc" text-anchor="end">5</text>
<line x1="715.7" y1="318.2" x2="874.3000000000001" y2="318.2" stroke="#a0a0a0" stroke-width="1.6"/>
<text x="715.7" y="323.4" font-size="14.6" fill="#dcdcdc" text-anchor="end">0</text>
<line x1="715.7" y1="374.2" x2="874.3000000000001" y2="374.2" stroke="#a0a0a0" stroke-width="1.6"/>
<text x="715.7" y="379.4" font-size="14.6" fill="#dcdcdc" text-anchor="end">-5</text>
<line x1="715.7" y1="430.2" x2="874.3000000000001" y2="430.2" stroke="#a0a0a0" stroke-width="1.6"/>
<text x="715.7" y="435.4" font-size="14.6" fill="#dcdcdc" text-anchor="end">-10</text>
<line x1="715.7" y1="485.0" x2="720.7" y2="485.0" stroke="#b4b4b4" stroke-width="1.6"/>
<text x="715.7" y="490.2" font-size="14.6" fill="#dcdcdc" text-anchor="end">-15</text>
<path d="M720.7,491.0V149.0H874.3000000000001V491.0" fill="none" stroke="#b4b4b4" stroke-width="1.6"/>
<line x1="720.7" y1="485.0" x2="874.3000000000001" y2="485.0" stroke="#b4b4b4" stroke-width="1.6"/>
<rect x="736.0" y="297.57599999999996" width="123" height="21.624000000000013" fill="#0a0a0a"/>
<rect x="737.0" y="298.676" width="121" height="19.424000000000014" fill="url(#dY)"/>
<text x="783.2" y="142.6" font-size="14.6" fill="#dcdcdc" text-anchor="middle" textLength="49.5" lengthAdjust="spacingAndGlyphs">Delta C</text>
<text x="797.5" y="501.3" font-size="14.6" fill="#dcdcdc" text-anchor="middle" textLength="38" lengthAdjust="spacingAndGlyphs">100%</text>
<rect x="930.7" y="149.0" width="153.5999999999999" height="336.0" fill="#262626"/>
<line x1="925.7" y1="149.0" x2="930.7" y2="149.0" stroke="#b4b4b4" stroke-width="1.6"/>
<text x="925.7" y="154.2" font-size="14.6" fill="#dcdcdc" text-anchor="end">15</text>
<line x1="925.7" y1="206.2" x2="1084.3" y2="206.2" stroke="#a0a0a0" stroke-width="1.6"/>
<text x="925.7" y="211.39999999999998" font-size="14.6" fill="#dcdcdc" text-anchor="end">10</text>
<line x1="925.7" y1="262.2" x2="1084.3" y2="262.2" stroke="#a0a0a0" stroke-width="1.6"/>
<text x="925.7" y="267.4" font-size="14.6" fill="#dcdcdc" text-anchor="end">5</text>
<line x1="925.7" y1="318.2" x2="1084.3" y2="318.2" stroke="#a0a0a0" stroke-width="1.6"/>
<text x="925.7" y="323.4" font-size="14.6" fill="#dcdcdc" text-anchor="end">0</text>
<line x1="925.7" y1="374.2" x2="1084.3" y2="374.2" stroke="#a0a0a0" stroke-width="1.6"/>
<text x="925.7" y="379.4" font-size="14.6" fill="#dcdcdc" text-anchor="end">-5</text>
<line x1="925.7" y1="430.2" x2="1084.3" y2="430.2" stroke="#a0a0a0" stroke-width="1.6"/>
<text x="925.7" y="435.4" font-size="14.6" fill="#dcdcdc" text-anchor="end">-10</text>
<line x1="925.7" y1="485.0" x2="930.7" y2="485.0" stroke="#b4b4b4" stroke-width="1.6"/>
<text x="925.7" y="490.2" font-size="14.6" fill="#dcdcdc" text-anchor="end">-15</text>
<path d="M930.7,491.0V149.0H1084.3V491.0" fill="none" stroke="#b4b4b4" stroke-width="1.6"/>
<line x1="930.7" y1="485.0" x2="1084.3" y2="485.0" stroke="#b4b4b4" stroke-width="1.6"/>
<rect x="946.0" y="317.4" width="123" height="16.360000000000003" fill="#0a0a0a"/>
<rect x="947.0" y="318.5" width="121" height="14.160000000000002" fill="url(#dY)"/>
<text x="993.3" y="142.6" font-size="14.6" fill="#dcdcdc" text-anchor="middle" textLength="51.4" lengthAdjust="spacingAndGlyphs">Delta H</text>
<text x="1007.5" y="501.3" font-size="14.6" fill="#dcdcdc" text-anchor="middle" textLength="38" lengthAdjust="spacingAndGlyphs">100%</text>
<rect x="475" y="520" width="630" height="173.5" fill="#000"/>
<rect x="496.8" y="528" width="106.4" height="141.5" fill="#e8e8d8"/>
<rect x="498.0" y="529.2" width="104" height="69.8" fill="#c4c4aa"/>
<rect x="498.0" y="599" width="104" height="69.3" fill="#c2c4aa"/>
<text x="550.3" y="685.3" font-size="12.3" fill="#fff" text-anchor="middle">20%</text>
<rect x="620.0" y="528" width="106.4" height="141.5" fill="#e8e8d8"/>
<rect x="621.2" y="529.2" width="104" height="69.8" fill="#c4c48c"/>
<rect x="621.2" y="599" width="104" height="69.3" fill="#c2c389"/>
<text x="673.5" y="685.3" font-size="12.3" fill="#fff" text-anchor="middle">40%</text>
<rect x="743.0" y="528" width="106.4" height="141.5" fill="#e8e8d8"/>
<rect x="744.2" y="529.2" width="104" height="69.8" fill="#c4c26e"/>
<rect x="744.2" y="599" width="104" height="69.3" fill="#c2c16c"/>
<text x="796.5" y="685.3" font-size="12.3" fill="#fff" text-anchor="middle">60%</text>
<rect x="865.8" y="528" width="106.4" height="141.5" fill="#e8e8d8"/>
<rect x="867.0" y="529.2" width="104" height="69.8" fill="#c5c24c"/>
<rect x="867.0" y="599" width="104" height="69.3" fill="#c3c04b"/>
<text x="919.3" y="685.3" font-size="12.3" fill="#fff" text-anchor="middle">80%</text>
<rect x="989.3" y="528" width="106.4" height="141.5" fill="#e8e8d8"/>
<rect x="990.5" y="529.2" width="104" height="69.8" fill="#c8c400"/>
<rect x="990.5" y="599" width="104" height="69.3" fill="#c8c600"/>
<text x="1042.8" y="685.3" font-size="12.3" fill="#fff" text-anchor="middle">100%</text>
<text transform="translate(489.5,558.5) rotate(-90)" text-anchor="middle" font-size="12.3" fill="#fff">Actual</text>
<text transform="translate(489.5,638) rotate(-90)" text-anchor="middle" font-size="12.3" fill="#fff">Target</text>
<rect x="1116.2" y="118.3" width="731.7" height="585.7" fill="none" stroke="#c6be08" stroke-width="7.4"/>
<rect x="1151.3" y="147.2" width="689.7" height="523.0999999999999" fill="#262626"/>
<text x="1482" y="141.3" font-size="14.6" fill="#dcdcdc" text-anchor="middle" textLength="81" lengthAdjust="spacingAndGlyphs">CIE 1931 xy</text>
<path d="M1151.3,676.3V147.2H1841.0V670.3H1145.3" fill="none" stroke="#b4b4b4" stroke-width="1.6"/>
<line x1="1150.9" y1="670.3" x2="1150.9" y2="676.3" stroke="#b4b4b4" stroke-width="1.6"/>
<text x="1150.9" y="693.2" font-size="14.6" fill="#dcdcdc" text-anchor="middle">0</text>
<line x1="1145.3" y1="671.1999999999999" x2="1151.3" y2="671.1999999999999" stroke="#b4b4b4" stroke-width="1.6"/>
<text x="1144.7" y="676.8" font-size="14.6" fill="#dcdcdc" text-anchor="end">0</text>
<line x1="1232.2" y1="670.3" x2="1232.2" y2="676.3" stroke="#b4b4b4" stroke-width="1.6"/>
<text x="1232.2" y="693.2" font-size="14.6" fill="#dcdcdc" text-anchor="middle" textLength="20.7" lengthAdjust="spacingAndGlyphs">0,1</text>
<line x1="1145.3" y1="608.8499999999999" x2="1151.3" y2="608.8499999999999" stroke="#b4b4b4" stroke-width="1.6"/>
<text x="1144.7" y="614.4499999999999" font-size="14.6" fill="#dcdcdc" text-anchor="end" textLength="20.7" lengthAdjust="spacingAndGlyphs">0,1</text>
<line x1="1315.3" y1="670.3" x2="1315.3" y2="676.3" stroke="#b4b4b4" stroke-width="1.6"/>
<text x="1315.3" y="693.2" font-size="14.6" fill="#dcdcdc" text-anchor="middle" textLength="20.7" lengthAdjust="spacingAndGlyphs">0,2</text>
<line x1="1145.3" y1="546.4999999999999" x2="1151.3" y2="546.4999999999999" stroke="#b4b4b4" stroke-width="1.6"/>
<text x="1144.7" y="552.0999999999999" font-size="14.6" fill="#dcdcdc" text-anchor="end" textLength="20.7" lengthAdjust="spacingAndGlyphs">0,2</text>
<line x1="1395.8" y1="670.3" x2="1395.8" y2="676.3" stroke="#b4b4b4" stroke-width="1.6"/>
<text x="1395.8" y="693.2" font-size="14.6" fill="#dcdcdc" text-anchor="middle" textLength="20.7" lengthAdjust="spacingAndGlyphs">0,3</text>
<line x1="1145.3" y1="484.14999999999986" x2="1151.3" y2="484.14999999999986" stroke="#b4b4b4" stroke-width="1.6"/>
<text x="1144.7" y="489.7499999999999" font-size="14.6" fill="#dcdcdc" text-anchor="end" textLength="20.7" lengthAdjust="spacingAndGlyphs">0,3</text>
<line x1="1478.75" y1="670.3" x2="1478.75" y2="676.3" stroke="#b4b4b4" stroke-width="1.6"/>
<text x="1478.75" y="693.2" font-size="14.6" fill="#dcdcdc" text-anchor="middle" textLength="20.7" lengthAdjust="spacingAndGlyphs">0,4</text>
<line x1="1145.3" y1="421.79999999999995" x2="1151.3" y2="421.79999999999995" stroke="#b4b4b4" stroke-width="1.6"/>
<text x="1144.7" y="427.4" font-size="14.6" fill="#dcdcdc" text-anchor="end" textLength="20.7" lengthAdjust="spacingAndGlyphs">0,4</text>
<line x1="1561.5" y1="670.3" x2="1561.5" y2="676.3" stroke="#b4b4b4" stroke-width="1.6"/>
<text x="1561.5" y="693.2" font-size="14.6" fill="#dcdcdc" text-anchor="middle" textLength="20.7" lengthAdjust="spacingAndGlyphs">0,5</text>
<line x1="1145.3" y1="359.44999999999993" x2="1151.3" y2="359.44999999999993" stroke="#b4b4b4" stroke-width="1.6"/>
<text x="1144.7" y="365.04999999999995" font-size="14.6" fill="#dcdcdc" text-anchor="end" textLength="20.7" lengthAdjust="spacingAndGlyphs">0,5</text>
<line x1="1642.1" y1="670.3" x2="1642.1" y2="676.3" stroke="#b4b4b4" stroke-width="1.6"/>
<text x="1642.1" y="693.2" font-size="14.6" fill="#dcdcdc" text-anchor="middle" textLength="20.7" lengthAdjust="spacingAndGlyphs">0,6</text>
<line x1="1145.3" y1="297.09999999999985" x2="1151.3" y2="297.09999999999985" stroke="#b4b4b4" stroke-width="1.6"/>
<text x="1144.7" y="302.6999999999999" font-size="14.6" fill="#dcdcdc" text-anchor="end" textLength="20.7" lengthAdjust="spacingAndGlyphs">0,6</text>
<line x1="1725" y1="670.3" x2="1725" y2="676.3" stroke="#b4b4b4" stroke-width="1.6"/>
<text x="1725" y="693.2" font-size="14.6" fill="#dcdcdc" text-anchor="middle" textLength="20.7" lengthAdjust="spacingAndGlyphs">0,7</text>
<line x1="1145.3" y1="234.74999999999991" x2="1151.3" y2="234.74999999999991" stroke="#b4b4b4" stroke-width="1.6"/>
<text x="1144.7" y="240.3499999999999" font-size="14.6" fill="#dcdcdc" text-anchor="end" textLength="20.7" lengthAdjust="spacingAndGlyphs">0,7</text>
<line x1="1807.5" y1="670.3" x2="1807.5" y2="676.3" stroke="#b4b4b4" stroke-width="1.6"/>
<text x="1807.5" y="693.2" font-size="14.6" fill="#dcdcdc" text-anchor="middle" textLength="20.7" lengthAdjust="spacingAndGlyphs">0,8</text>
<line x1="1145.3" y1="172.39999999999995" x2="1151.3" y2="172.39999999999995" stroke="#b4b4b4" stroke-width="1.6"/>
<text x="1144.7" y="177.99999999999994" font-size="14.6" fill="#dcdcdc" text-anchor="end" textLength="20.7" lengthAdjust="spacingAndGlyphs">0,8</text>
<defs>
<linearGradient id="bbBg" x1="0" y1="0" x2="0" y2="1"><stop offset="0" stop-color="#4a4a4a"/><stop offset=".5" stop-color="#363636"/><stop offset="1" stop-color="#262626"/></linearGradient>
<linearGradient id="bbBtn" x1="0" y1="0" x2="0" y2="1"><stop offset="0" stop-color="#ababab"/><stop offset=".08" stop-color="#a0a0a0"/><stop offset="1" stop-color="#565656"/></linearGradient>
<linearGradient id="bbSel" x1="0" y1="0" x2="0" y2="1"><stop offset="0" stop-color="#1a1a1a"/><stop offset=".6" stop-color="#262626"/><stop offset="1" stop-color="#3c3c3c"/></linearGradient>
<linearGradient id="bbSm" x1="0" y1="0" x2="0" y2="1"><stop offset="0" stop-color="#aaa"/><stop offset="1" stop-color="#686868"/></linearGradient>
<linearGradient id="bbNav" x1="0" y1="0" x2="0" y2="1"><stop offset="0" stop-color="#c0c0c0"/><stop offset=".08" stop-color="#acacac"/><stop offset="1" stop-color="#6a6a6a"/></linearGradient>
<linearGradient id="bbC" x1="0" y1="0" x2="0" y2="1"><stop offset="0" stop-color="#7e7e7e"/><stop offset="1" stop-color="#b4b4b4"/></linearGradient>
<linearGradient id="bbC0" x1="0" y1="0" x2="0" y2="1"><stop offset="0" stop-color="#6a6a6a"/><stop offset="1" stop-color="#9c9c9c"/></linearGradient>
<linearGradient id="bbC2" x1="0" y1="0" x2="0" y2="1"><stop offset="0" stop-color="#909090"/><stop offset="1" stop-color="#c4c4c4"/></linearGradient>
<linearGradient id="bbDk" x1="0" y1="0" x2="0" y2="1"><stop offset="0" stop-color="#262626"/><stop offset="1" stop-color="#444"/></linearGradient>
<linearGradient id="bbL1" x1="0" y1="0" x2="0" y2="1"><stop offset="0" stop-color="#a6a6a6"/><stop offset="1" stop-color="#8a8a8a"/></linearGradient>
<linearGradient id="bbL2" x1="0" y1="0" x2="0" y2="1"><stop offset="0" stop-color="#8c8c8c"/><stop offset="1" stop-color="#686868"/></linearGradient>
<linearGradient id="bbSt" x1="0" y1="0" x2="0" y2="1"><stop offset="0" stop-color="#b8b8b8"/><stop offset=".5" stop-color="#aaa"/><stop offset=".5" stop-color="#969696"/><stop offset="1" stop-color="#8c8c8c"/></linearGradient>
</defs>
<rect x="0" y="968.5" width="1920" height="71" fill="url(#bbBg)"/>
<path d="M1.5,1040V973a4,4 0 0 1 4,-4H48a4,4 0 0 1 4,4V1040Z" fill="url(#bbBtn)"/>
<circle cx="26.7" cy="980" r="8.8" fill="url(#bbC0)"/>
<path d="M22,981.5h9.6l-4.8,-5.2z" fill="#333"/>
<rect x="6.3" y="997.6" width="40.8" height="35.2" rx="4" fill="#d4d400"/>
<rect x="7.5" y="998.8" width="38.4" height="32.8" rx="3" fill="#ffff00"/>
<path d="M59.2,1040V973a4,4 0 0 1 4,-4H224.2a4,4 0 0 1 4,4V1040Z" fill="url(#bbBtn)"/>
<rect x="64.60000000000001" y="974.6" width="158.6" height="41" rx="4" fill="#84846c"/>
<rect x="65.7" y="975.8" width="156.4" height="38.8" rx="3" fill="#c3c3a9"/>
<text x="143.5" y="1032.4" font-size="11" fill="#2a2a2a" text-anchor="middle" font-weight="bold">20%</text>
<path d="M230.6,1040V973a4,4 0 0 1 4,-4H395.6a4,4 0 0 1 4,4V1040Z" fill="url(#bbBtn)"/>
<rect x="236.0" y="974.6" width="158.6" height="41" rx="4" fill="#84846c"/>
<rect x="237.1" y="975.8" width="156.4" height="38.8" rx="3" fill="#c3c38b"/>
<text x="314.9" y="1032.4" font-size="11" fill="#2a2a2a" text-anchor="middle" font-weight="bold">40%</text>
<path d="M402.4,1040V973a4,4 0 0 1 4,-4H567.4a4,4 0 0 1 4,4V1040Z" fill="url(#bbBtn)"/>
<rect x="407.79999999999995" y="974.6" width="158.6" height="41" rx="4" fill="#84846c"/>
<rect x="408.9" y="975.8" width="156.4" height="38.8" rx="3" fill="#c3c16d"/>
<text x="486.7" y="1032.4" font-size="11" fill="#2a2a2a" text-anchor="middle" font-weight="bold">60%</text>
<path d="M574,1040V973a4,4 0 0 1 4,-4H739a4,4 0 0 1 4,4V1040Z" fill="url(#bbBtn)"/>
<rect x="579.4" y="974.6" width="158.6" height="41" rx="4" fill="#84846c"/>
<rect x="580.5" y="975.8" width="156.4" height="38.8" rx="3" fill="#c5c14b"/>
<text x="658.3" y="1032.4" font-size="11" fill="#2a2a2a" text-anchor="middle" font-weight="bold">80%</text>
<path d="M745.5,1040V973a4,4 0 0 1 4,-4H910.5a4,4 0 0 1 4,4V1040Z" fill="url(#bbSel)"/>
<rect x="750.9" y="974.6" width="158.6" height="41" rx="4" fill="#6c6c10"/>
<rect x="752.0" y="975.8" width="156.4" height="38.8" rx="3" fill="#c8c400"/>
<text x="829.8" y="1032.4" font-size="11" fill="#fff" text-anchor="middle" font-weight="bold">100%</text>
<path d="M1563.5,973a4,4 0 0 1 4,-4H1613.2a4,4 0 0 1 4,4V1034a4,4 0 0 1 -4,4H1567.5a4,4 0 0 1 -4,-4Z" fill="url(#bbL2)"/>
<path d="M1563.5,989V973a4,4 0 0 1 4,-4H1613.2a4,4 0 0 1 4,4V989Z" fill="url(#bbL1)"/>
<line x1="1563.5" y1="989.3" x2="1617.2" y2="989.3" stroke="#4a4a4a" stroke-width="1.2"/>
<circle cx="1590.4" cy="978.3" r="8" fill="url(#bbC)"/>
<path d="M1585.3,980.9h10.4l-5.2,-4.4z" fill="#383838"/>
<rect x="1575" y="998.1" width="30.8" height="31.2" rx="4" fill="url(#bbSt)" stroke="#181818" stroke-width="3"/>
<rect x="1582.8" y="1006.7" width="15.3" height="15" fill="#0a0a0a"/>
<rect x="1582.8" y="1006.7" width="15.3" height="7" fill="#222"/>
<path d="M1619,1002.3V973a4,4 0 0 1 4,-4H1669.3V1002.3Z" fill="url(#bbSm)"/>
<rect x="1669.3" y="969" width="1" height="33.3" fill="#3a3a3a"/>
<circle cx="1644.3" cy="986" r="10.8" fill="url(#bbC)"/>
<rect x="1671.3" y="969" width="50.3" height="33.3" fill="url(#bbSm)"/>
<rect x="1721.6" y="969" width="1" height="33.3" fill="#3a3a3a"/>
<circle cx="1696.6" cy="986" r="10.8" fill="url(#bbC)"/>
<rect x="1722.5" y="969" width="50.3" height="33.3" fill="url(#bbSm)"/>
<rect x="1772.8" y="969" width="1" height="33.3" fill="#3a3a3a"/>
<circle cx="1747.8" cy="986" r="10.8" fill="url(#bbC)"/>
<rect x="1773.3" y="969" width="50.3" height="33.3" fill="url(#bbSm)"/>
<rect x="1823.6" y="969" width="1" height="33.3" fill="#3a3a3a"/>
<circle cx="1798.6" cy="986" r="10.8" fill="url(#bbC)"/>
<rect x="1824.2" y="969" width="50.3" height="33.3" fill="url(#bbSm)"/>
<rect x="1874.5" y="969" width="1" height="33.3" fill="#3a3a3a"/>
<circle cx="1849.5" cy="986" r="10.8" fill="url(#bbC)"/>
<rect x="1640.4" y="981.6" width="8.4" height="8.4" fill="#363636"/>
<path d="M1693.2,981.2v10.8l9.8,-5.4z" fill="#363636"/>
<path d="M1744.2,980.6h-2.3v11h2.3M1751,980.6h2.3v11h-2.3" fill="none" stroke="#363636" stroke-width="1.6"/>
<rect x="1745.3" y="985.3" width="1.4" height="1.6" fill="#363636"/>
<rect x="1748.5" y="985.3" width="1.4" height="1.6" fill="#363636"/>
<path d="M1798.6,986c-1.8,-3.2 -3.2,-3.7 -4.6,-3.7a3.6,3.6 0 0 0 0,7.2c1.4,0 2.8,-0.5 4.6,-3.5c1.8,-3.2 3.2,-3.7 4.6,-3.7a3.6,3.6 0 0 1 0,7.2c-1.4,0 -2.8,-0.5 -4.6,-3.5z" fill="none" stroke="#363636" stroke-width="1.7"/>
<path d="M1844,985a5.6,5.6 0 0 1 9.6,-2.6" fill="none" stroke="#363636" stroke-width="2"/>
<path d="M1855.6,979.2v5.4h-5.4z" fill="#363636"/>
<path d="M1854.9,987.4a5.6,5.6 0 0 1 -9.6,2.6" fill="none" stroke="#363636" stroke-width="2"/>
<path d="M1843.3,993.2v-5.4h5.4z" fill="#363636"/>
<rect x="1875.2" y="969" width="45" height="33.3" fill="#2c2c2c"/>
<circle cx="1900.7" cy="986" r="10.8" fill="url(#bbDk)"/>
<path d="M1619,1040V1008.3a4,4 0 0 1 4,-4H1772V1040Z" fill="url(#bbNav)"/>
<rect x="1773" y="1004.3" width="147" height="36" fill="url(#bbNav)"/>
<rect x="1772" y="1004.3" width="1" height="36" fill="#3a3a3a"/>
<circle cx="1653.6" cy="1021" r="10.8" fill="url(#bbC2)"/>
<circle cx="1894.2" cy="1021" r="10.8" fill="url(#bbC2)"/>
<path d="M1653,1016.6l-4.2,4.5l4.2,4.5M1657.8,1016.6l-4.2,4.5l4.2,4.5" fill="none" stroke="#3c3c3c" stroke-width="1.5"/>
<path d="M1890.6,1016.6l4.2,4.5l-4.2,4.5M1895.4,1016.6l4.2,4.5l-4.2,4.5" fill="none" stroke="#3c3c3c" stroke-width="1.5"/>
<text x="1684.4" y="1029.3" font-size="24.5" fill="#383838" textLength="56" lengthAdjust="spacingAndGlyphs" stroke="#383838" stroke-width=".5">Back</text>
<text x="1805" y="1029.3" font-size="24.5" fill="#383838" textLength="57.6" lengthAdjust="spacingAndGlyphs" stroke="#383838" stroke-width=".5">Next</text>
</svg>
<div id="cie" style="left:1151px;top:150px;width:609px;height:520px;clip-path:polygon(141.0px 516.7px,140.7px 516.6px,140.2px 516.5px,139.6px 516.3px,139.0px 516.0px,138.2px 515.5px,137.4px 515.0px,136.4px 514.3px,135.3px 513.5px,133.8px 512.5px,132.1px 511.4px,130.4px 510.3px,128.9px 509.3px,127.6px 508.4px,126.5px 507.7px,125.5px 507.0px,124.3px 506.1px,122.9px 505.2px,121.5px 504.2px,120.1px 503.0px,118.5px 501.8px,116.9px 500.4px,115.3px 499.0px,113.5px 497.4px,111.5px 495.4px,109.4px 493.1px,107.2px 490.6px,104.8px 487.7px,102.2px 484.3px,99.5px 480.5px,96.6px 476.3px,93.5px 471.6px,90.3px 466.2px,86.8px 460.1px,83.2px 453.4px,79.3px 445.9px,75.3px 437.6px,70.9px 428.3px,66.2px 418.2px,61.5px 407.2px,56.7px 395.2px,51.9px 382.0px,47.1px 367.7px,42.3px 352.5px,37.6px 336.4px,32.9px 319.2px,28.2px 300.9px,23.7px 282.0px,19.6px 263.0px,15.9px 243.6px,12.4px 223.7px,9.4px 203.9px,7.0px 184.6px,5.2px 165.7px,4.0px 147.1px,3.3px 129.1px,3.5px 112.0px,4.4px 95.7px,6.1px 80.1px,8.5px 65.6px,11.7px 52.6px,15.8px 41.0px,20.7px 30.8px,26.2px 22.1px,32.2px 15.0px,38.8px 9.6px,46.0px 5.9px,53.6px 3.5px,61.3px 2.0px,69.2px 1.7px,77.4px 2.6px,85.7px 4.3px,94.1px 6.2px,102.4px 8.5px,110.8px 11.3px,119.1px 14.5px,127.3px 17.8px,135.3px 21.3px,143.2px 25.1px,151.0px 29.0px,158.7px 33.0px,166.3px 37.1px,173.8px 41.3px,181.3px 45.6px,188.8px 50.0px,196.3px 54.5px,203.7px 59.2px,211.1px 63.9px,218.5px 68.7px,225.9px 73.6px,233.2px 78.5px,240.6px 83.6px,247.9px 88.7px,255.2px 93.8px,262.6px 99.0px,269.9px 104.2px,277.2px 109.5px,284.6px 114.8px,291.9px 120.1px,299.3px 125.5px,306.6px 130.9px,313.9px 136.3px,321.2px 141.8px,328.6px 147.2px,335.8px 152.7px,343.1px 158.1px,350.4px 163.6px,357.7px 169.0px,364.9px 174.4px,372.1px 179.9px,379.2px 185.3px,386.3px 190.6px,393.4px 196.0px,400.4px 201.3px,407.4px 206.5px,414.2px 211.7px,421.1px 216.9px,427.8px 222.0px,434.5px 227.1px,441.1px 232.1px,447.6px 237.0px,454.0px 241.8px,460.3px 246.6px,466.5px 251.2px,472.5px 255.8px,478.4px 260.3px,484.2px 264.7px,489.9px 269.0px,495.3px 273.1px,500.5px 277.0px,505.5px 280.8px,510.4px 284.5px,515.1px 288.0px,519.7px 291.5px,524.1px 294.9px,528.4px 298.1px,532.5px 301.2px,536.4px 304.1px,540.1px 306.9px,543.6px 309.5px,546.9px 312.1px,550.1px 314.5px,553.1px 316.7px,556.0px 318.9px,558.7px 321.0px,561.1px 322.8px,563.2px 324.4px,565.4px 326.1px,568.0px 328.1px,571.2px 330.5px,574.8px 333.2px,578.3px 335.9px,581.5px 338.2px,584.1px 340.3px,586.5px 342.1px,588.7px 343.7px,590.6px 345.2px,592.3px 346.4px,593.8px 347.5px,595.2px 348.5px,596.3px 349.5px,597.4px 350.4px,598.3px 351.4px,599.0px 352.1px,599.5px 352.7px)">
<style>#cie i{height:2px}#ins i{display:block;height:3px}</style>
<i style="background:linear-gradient(90deg,#0f0 54px,#0f0 82px)"></i><i style="background:linear-gradient(90deg,#0f0 46px,#0f0 92px)"></i><i style="background:linear-gradient(90deg,#0f0 40px,#0f0 100px)"></i><i style="background:linear-gradient(90deg,#0f0 36px,#0f0 106px)"></i><i style="background:linear-gradient(90deg,#0f0 34px,#0f0 112px)"></i><i style="background:linear-gradient(90deg,#0f0 32px,#0f0 118px)"></i><i style="background:linear-gradient(90deg,#0f0 30px,#0f0 124px)"></i><i style="background:linear-gradient(90deg,#0f0 28px,#0f0 128px)"></i><i style="background:linear-gradient(90deg,#00ff01 26px,#0f0 134px)"></i><i style="background:linear-gradient(90deg,#00ff02 24px,#0f0 138px)"></i><i style="background:linear-gradient(90deg,#00ff04 22px,#0f0 82px,#0f0 142px)"></i><i style="background:linear-gradient(90deg,#00ff04 22px,#0f0 72px,#0f0 146px)"></i><i style="background:linear-gradient(90deg,#00ff05 20px,#0f0 68px,#0f0 150px)"></i><i style="background:linear-gradient(90deg,#00ff07 18px,#0f0 68px,#0f0 154px)"></i><i style="background:linear-gradient(90deg,#00ff07 18px,#0f0 70px,#0f0 158px)"></i><i style="background:linear-gradient(90deg,#00ff08 16px,#0f0 72px,#0f0 162px)"></i><i style="background:linear-gradient(90deg,#00ff09 16px,#0f0 74px,#0f0 166px)"></i><i style="background:linear-gradient(90deg,#00ff0a 14px,#0f0 76px,#0f0 170px)"></i><i style="background:linear-gradient(90deg,#00ff0b 14px,#0f0 80px,#0f0 172px)"></i><i style="background:linear-gradient(90deg,#00ff0c 12px,#0f0 82px,#0f0 176px)"></i><i style="background:linear-gradient(90deg,#00ff0d 12px,#0f0 86px,#0f0 180px)"></i><i style="background:linear-gradient(90deg,#00ff0e 12px,#0f0 90px,#0f0 184px)"></i><i style="background:linear-gradient(90deg,#00ff0f 10px,#0f0 92px,#0f0 186px)"></i><i style="background:linear-gradient(90deg,#00ff10 10px,#0f0 94px,#0f0 190px)"></i><i style="background:linear-gradient(90deg,#0f1 10px,#0f0 98px,#0f0 194px)"></i><i style="background:linear-gradient(90deg,#00ff12 8px,#0f0 102px,#0f0 196px)"></i><i style="background:linear-gradient(90deg,#00ff13 8px,#0f0 104px,#0f0 200px)"></i><i style="background:linear-gradient(90deg,#00ff13 8px,#0f0 108px,#0f0 204px)"></i><i style="background:linear-gradient(90deg,#00ff14 8px,#0f0 110px,#0f0 206px)"></i><i style="background:linear-gradient(90deg,#00ff15 6px,#0f0 114px,#0f0 210px)"></i><i style="background:linear-gradient(90deg,#00ff16 6px,#0f0 118px,#0f0 212px)"></i><i style="background:linear-gradient(90deg,#00ff17 6px,#0f0 120px,#0f0 216px)"></i><i style="background:linear-gradient(90deg,#00ff18 6px,#0f0 124px,#0f0 218px)"></i><i style="background:linear-gradient(90deg,#00ff19 4px,#0f0 126px,#0f0 222px)"></i><i style="background:linear-gradient(90deg,#00ff1a 4px,#0f0 130px,#0f0 224px)"></i><i style="background:linear-gradient(90deg,#00ff1b 4px,#0f0 134px,#0f0 228px)"></i><i style="background:linear-gradient(90deg,#00ff1c 4px,#0f0 136px,#0f0 230px)"></i><i style="background:linear-gradient(90deg,#00ff1d 4px,#0f0 140px,#0f0 234px)"></i><i style="background:linear-gradient(90deg,#00ff1e 4px,#0f0 142px,#0f0 236px)"></i><i style="background:linear-gradient(90deg,#00ff1f 4px,#0f0 146px,#0f0 240px)"></i><i style="background:linear-gradient(90deg,#00ff20 2px,#0f0 150px,#0f0 242px)"></i><i style="background:linear-gradient(90deg,#00ff21 2px,#0f0 152px,#0f0 246px)"></i><i style="background:linear-gradient(90deg,#0f2 2px,#0f0 156px,#0f0 248px)"></i><i style="background:linear-gradient(90deg,#00ff23 2px,#0f0 158px,#0f0 252px)"></i><i style="background:linear-gradient(90deg,#00ff24 2px,#0f0 162px,#0f0 254px)"></i><i style="background:linear-gradient(90deg,#00ff25 2px,#0f0 166px,#0f0 258px)"></i><i style="background:linear-gradient(90deg,#00ff26 2px,#0f0 168px,#0f0 260px)"></i><i style="background:linear-gradient(90deg,#00ff26 2px,#0f0 172px,#0f0 262px)"></i><i style="background:linear-gradient(90deg,#00ff27 2px,#0f0 176px,#02ff00 266px)"></i><i style="background:linear-gradient(90deg,#00ff28 2px,#0f0 178px,#03ff00 266px,#05ff00 268px)"></i><i style="background:linear-gradient(90deg,#00ff29 2px,#0f0 182px,#01ff00 264px,#0bff00 272px)"></i><i style="background:linear-gradient(90deg,#00ff2b 0px,#0f0 186px,#02ff00 264px,#0eff00 274px)"></i><i style="background:linear-gradient(90deg,#00ff2c 0px,#0f0 188px,#0f0 262px,#12ff00 276px)"></i><i style="background:linear-gradient(90deg,#00ff2d 0px,#0f0 192px,#01ff00 262px,#18ff00 280px)"></i><i style="background:linear-gradient(90deg,#00ff2e 0px,#0f0 194px,#02ff00 262px,#1cff00 282px)"></i><i style="background:linear-gradient(90deg,#00ff2f 0px,#0f0 198px,#01ff00 260px,#2f0 286px)"></i><i style="background:linear-gradient(90deg,#00ff30 0px,#0f0 202px,#02ff00 260px,#26ff00 288px)"></i><i style="background:linear-gradient(90deg,#00ff31 0px,#00ff02 190px,#03ff00 260px,#2aff00 290px)"></i><i style="background:linear-gradient(90deg,#00ff32 0px,#00ff03 188px,#0f0 238px,#01ff00 258px,#31ff00 294px)"></i><i style="background:linear-gradient(90deg,#0f3 0px,#00ff04 188px,#0f0 222px,#02ff00 258px,#35ff00 296px)"></i><i style="background:linear-gradient(90deg,#00ff34 0px,#00ff05 188px,#0f0 220px,#0f0 256px,#3aff00 298px)"></i><i style="background:linear-gradient(90deg,#00ff35 0px,#00ff06 188px,#0f0 220px,#01ff00 256px,#41ff00 302px)"></i><i style="background:linear-gradient(90deg,#00ff37 0px,#00ff08 186px,#0f0 222px,#02ff00 256px,#45ff00 304px)"></i><i style="background:linear-gradient(90deg,#00ff38 0px,#00ff09 186px,#0f0 224px,#0f0 254px,#4aff00 306px)"></i><i style="background:linear-gradient(90deg,#00ff39 0px,#00ff0a 186px,#0f0 228px,#01ff00 254px,#52ff00 310px)"></i><i style="background:linear-gradient(90deg,#00ff3a 0px,#00ff0b 186px,#0f0 230px,#02ff00 254px,#57ff00 312px)"></i><i style="background:linear-gradient(90deg,#00ff3b 0px,#00ff0d 184px,#0f0 234px,#01ff00 252px,#5fff00 316px)"></i><i style="background:linear-gradient(90deg,#00ff3c 0px,#00ff0e 184px,#0f0 236px,#02ff00 252px,#64ff00 318px)"></i><i style="background:linear-gradient(90deg,#00ff3e 0px,#00ff10 184px,#0f0 240px,#03ff00 252px,#6f0 318px,#69ff00 320px)"></i><i style="background:linear-gradient(90deg,#00ff3f 0px,#0f1 184px,#0f0 242px,#04ff00 252px,#67ff00 318px,#72ff00 324px)"></i><i style="background:linear-gradient(90deg,#00ff40 0px,#00ff12 184px,#0f0 246px,#0dff00 258px,#70ff00 322px,#7f0 326px)"></i><i style="background:linear-gradient(90deg,#00ff41 0px,#00ff14 182px,#0f0 248px,#61ff00 312px,#7dff00 328px)"></i><i style="background:linear-gradient(90deg,#00ff42 0px,#00ff15 182px,#01ff00 248px,#63ff00 312px,#86ff00 332px)"></i><i style="background:linear-gradient(90deg,#0f4 0px,#00ff16 182px,#02ff00 248px,#65ff00 312px,#8cff00 334px)"></i><i style="background:linear-gradient(90deg,#00ff45 0px,#00ff18 182px,#01ff02 246px,#63ff00 310px,#92ff00 336px)"></i><i style="background:linear-gradient(90deg,#00ff46 2px,#00ff19 182px,#02ff03 246px,#4f0 290px,#9cff00 340px)"></i><i style="background:linear-gradient(90deg,#00ff47 2px,#00ff1a 182px,#00ff05 244px,#26ff00 270px,#8bff00 330px,#a2ff00 342px)"></i><i style="background:linear-gradient(90deg,#00ff48 2px,#00ff1c 182px,#01ff07 244px,#2bff00 272px,#8eff00 330px,#a9ff00 344px)"></i><i style="background:linear-gradient(90deg,#00ff4a 2px,#00ff1d 182px,#02ff08 244px,#2fff00 274px,#94ff00 332px,#b3ff00 348px)"></i><i style="background:linear-gradient(90deg,#00ff4b 2px,#00ff1f 180px,#00ff0a 242px,#34ff00 276px,#96ff00 332px,#baff00 350px)"></i><i style="background:linear-gradient(90deg,#00ff4c 2px,#00ff20 180px,#01ff0b 242px,#38ff00 278px,#9dff00 334px,#c1ff00 352px)"></i><i style="background:linear-gradient(90deg,#00ff4e 2px,#0f2 180px,#02ff0d 242px,#41ff00 282px,#a7ff00 338px,#cdff00 356px)"></i><i style="background:linear-gradient(90deg,#00ff4f 2px,#00ff23 180px,#00ff0f 240px,#46ff00 284px,#af0 338px,#d4ff00 358px)"></i><i style="background:linear-gradient(90deg,#00ff50 2px,#00ff25 180px,#01ff10 240px,#4eff00 288px,#b5ff00 342px,#dcff00 360px)"></i><i style="background:linear-gradient(90deg,#00ff52 2px,#00ff26 180px,#00ff12 238px,#54ff00 290px,#b8ff00 342px,#e9ff00 364px)"></i><i style="background:linear-gradient(90deg,#00ff53 2px,#00ff28 178px,#01ff14 238px,#5dff00 294px,#c4ff00 346px,#f1ff00 366px)"></i><i style="background:linear-gradient(90deg,#0f5 2px,#00ff2a 178px,#02ff15 238px,#62ff00 296px,#c7ff00 346px,#faff00 368px)"></i><i style="background:linear-gradient(90deg,#00ff56 2px,#00ff2b 178px,#00ff18 236px,#61ff00 294px,#c6ff00 344px,#fdff00 368px,#fff700 372px)"></i><i style="background:linear-gradient(90deg,#00ff57 4px,#00ff2c 180px,#01ff19 236px,#63ff02 294px,#c9ff00 344px,#fffd00 368px,#ffef00 374px)"></i><i style="background:linear-gradient(90deg,#00ff59 4px,#00ff2e 178px,#02ff1b 236px,#65ff03 294px,#adff00 330px,#fffe00 366px,#ffe700 376px)"></i><i style="background:linear-gradient(90deg,#00ff5a 4px,#00ff30 178px,#00ff1d 234px,#63ff06 292px,#8eff00 314px,#f5ff00 360px,#ff0 364px,#ffdb00 380px)"></i><i style="background:linear-gradient(90deg,#00ff5c 4px,#00ff31 178px,#01ff1f 234px,#62ff08 290px,#95ff00 316px,#feff00 362px,#ffd400 382px)"></i><i style="background:linear-gradient(90deg,#00ff5d 4px,#0f3 178px,#02ff20 234px,#64ff0a 290px,#9cff00 318px,#fdff00 360px,#ffcd00 384px)"></i><i style="background:linear-gradient(90deg,#00ff5f 4px,#00ff35 178px,#01ff23 232px,#62ff0c 288px,#a3ff00 320px,#fffd00 360px,#ffc700 386px,#ffc300 388px)"></i><i style="background:linear-gradient(90deg,#00ff60 4px,#00ff36 178px,#02ff24 232px,#64ff0e 288px,#afff00 324px,#fffe00 358px,#ffcb00 382px,#ffbd00 390px)"></i><i style="background:linear-gradient(90deg,#00ff62 4px,#00ff39 176px,#00ff27 230px,#5eff11 284px,#b7ff00 326px,#ff0 356px,#ffcb00 380px,#ffb700 392px)"></i><i style="background:linear-gradient(90deg,#00ff64 4px,#00ff3a 176px,#01ff29 230px,#65ff12 286px,#c3ff00 330px,#feff00 354px,#ffc800 380px,#ffae00 396px)"></i><i style="background:linear-gradient(90deg,#00ff65 6px,#00ff3c 178px,#02ff2a 230px,#63ff15 284px,#cbff00 332px,#fdff00 352px,#ffc100 382px,#ffa800 398px)"></i><i style="background:linear-gradient(90deg,#00ff67 6px,#00ff3d 178px,#00ff2d 228px,#61ff18 282px,#c5ff02 328px,#fffd00 352px,#ffc900 376px,#ffa300 400px)"></i><i style="background:linear-gradient(90deg,#00ff68 6px,#00ff3f 178px,#01ff2f 228px,#63ff19 282px,#c8ff03 328px,#fffe00 350px,#ffc900 374px,#ff9b00 404px)"></i><i style="background:linear-gradient(90deg,#00ff6a 6px,#00ff41 178px,#02ff31 228px,#66ff1b 282px,#ccff05 328px,#faff00 346px,#ff0 348px,#ffc900 372px,#f90 404px,#ff9600 406px)"></i><i style="background:linear-gradient(90deg,#00ff6c 6px,#0f4 176px,#0f3 226px,#64ff1e 280px,#cbff08 326px,#feff00 346px,#ffc600 372px,#ff9600 404px,#ff9100 408px)"></i><i style="background:linear-gradient(90deg,#00ff6d 6px,#00ff45 176px,#02ff35 226px,#62ff21 278px,#c9ff0b 324px,#fdff00 344px,#ffc300 372px,#ff9400 404px,#ff8d00 410px)"></i><i style="background:linear-gradient(90deg,#00ff6f 6px,#00ff47 176px,#00ff38 224px,#5cff24 274px,#c3ff0f 320px,#fffd02 344px,#ffc700 368px,#ff9600 400px,#ff8600 414px)"></i><i style="background:linear-gradient(90deg,#00ff71 6px,#00ff49 176px,#01ff3a 224px,#62ff26 276px,#c6ff11 320px,#fffe05 342px,#ffd300 360px,#ffa400 388px,#ff8200 416px)"></i><i style="background:linear-gradient(90deg,#00ff72 8px,#00ff4b 178px,#02ff3c 224px,#65ff28 276px,#caff13 320px,#ffff08 340px,#ffd000 360px,#ff9e00 390px,#ff7e00 418px)"></i><i style="background:linear-gradient(90deg,#00ff74 8px,#00ff4d 178px,#00ff3f 222px,#5fff2b 272px,#c4ff17 316px,#feff0b 338px,#ffc800 362px,#f90 392px,#ff7800 422px)"></i><i style="background:linear-gradient(90deg,#00ff76 8px,#00ff4f 178px,#01ff41 222px,#61ff2e 272px,#c7ff19 316px,#fdff0f 336px,#ffc100 364px,#ff9100 396px,#ff7400 424px)"></i><i style="background:linear-gradient(90deg,#00ff78 8px,#00ff51 178px,#02ff43 222px,#63ff30 272px,#cbff1b 316px,#fffd11 336px,#ffc903 358px,#f90 388px,#ff7000 426px)"></i><i style="background:linear-gradient(90deg,#00ff7a 8px,#00ff53 178px,#00ff46 220px,#61ff33 270px,#caff1f 314px,#fffe14 334px,#ffca06 356px,#ffa700 376px,#ff7b00 412px,#ff6a00 430px)"></i><i style="background:linear-gradient(90deg,#00ff7c 8px,#0f5 178px,#01ff48 220px,#64ff35 270px,#c8ff22 312px,#ffff17 332px,#ffca08 354px,#ffa400 376px,#f70 414px,#ff6700 432px)"></i><i style="background:linear-gradient(90deg,#00ff7e 8px,#00ff57 178px,#00ff4b 218px,#55ff3b 262px,#bcff27 306px,#feff1b 330px,#ffc70a 354px,#ff9c00 380px,#ff6f00 420px,#ff6300 434px)"></i><i style="background:linear-gradient(90deg,#00ff7f 10px,#00ff5a 178px,#00ff4d 218px,#60ff3b 266px,#c5ff29 308px,#fdff1e 328px,#ffc30c 354px,#ff9600 382px,#ff6b00 422px,#ff5e00 438px)"></i><i style="background:linear-gradient(90deg,#00ff81 10px,#00ff5c 178px,#02ff4f 218px,#62ff3e 266px,#c9ff2b 308px,#fffd20 328px,#ffc810 350px,#ff9901 378px,#ff6d00 418px,#ff5b00 440px)"></i><i style="background:linear-gradient(90deg,#00ff83 10px,#00ff5e 178px,#00ff52 216px,#5cff42 262px,#c2ff2f 304px,#fffe24 326px,#ffc813 348px,#ff9903 376px,#ff7600 406px,#ff5800 442px)"></i><i style="background:linear-gradient(90deg,#00ff85 10px,#00ff61 178px,#01ff55 216px,#63ff43 264px,#cbff31 306px,#ffff28 324px,#ffc916 346px,#ff9906 374px,#ff7c00 398px,#ff5400 446px)"></i><i style="background:linear-gradient(90deg,#00ff87 10px,#00ff63 178px,#02ff57 216px,#66ff46 264px,#caff34 304px,#feff2b 322px,#ffc517 346px,#ff9607 374px,#ff7900 398px,#ff5100 448px)"></i><i style="background:linear-gradient(90deg,#00ff89 12px,#00ff65 180px,#00ff5b 214px,#5fff4a 260px,#c3ff39 300px,#fcff2f 320px,#ffc119 346px,#ff9108 376px,#ff7300 402px,#ff4e00 450px)"></i><i style="background:linear-gradient(90deg,#00ff8b 12px,#00ff67 180px,#01ff5d 214px,#61ff4d 260px,#c7ff3c 300px,#fffd31 320px,#ffca1f 340px,#ff990d 368px,#ff6f00 404px,#ff4a00 454px)"></i><i style="background:linear-gradient(90deg,#00ff8d 12px,#00ff6a 180px,#03ff60 214px,#64ff50 260px,#cbff3e 300px,#fffe35 318px,#ffcb22 338px,#ff990f 366px,#ff6d00 404px,#ff4700 456px)"></i><i style="background:linear-gradient(90deg,#00ff90 12px,#00ff6c 180px,#00ff63 212px,#62ff53 258px,#c9ff42 298px,#ffff3a 316px,#ffcb25 336px,#ff9c13 362px,#ff7002 398px,#ff4900 450px,#f40 458px)"></i><i style="background:linear-gradient(90deg,#00ff92 12px,#00ff6f 180px,#02ff66 212px,#65ff56 258px,#cdff45 298px,#fdff3d 314px,#ffc325 338px,#ff9312 366px,#ff6901 404px,#ff4200 460px,#ff4100 462px)"></i><i style="background:linear-gradient(90deg,#00ff94 12px,#00ff72 180px,#00ff69 210px,#54ff5c 250px,#bbff4c 290px,#fcff41 312px,#ffdf34 324px,#ffac1f 348px,#ff7f0c 380px,#ff5b00 418px,#ff3e00 464px)"></i><i style="background:linear-gradient(90deg,#00ff96 14px,#00ff74 182px,#01ff6c 210px,#60ff5d 254px,#c4ff4e 292px,#fffd44 312px,#ffc82e 332px,#ff991a 358px,#ff6e07 394px,#f50 424px,#ff3c00 466px)"></i><i style="background:linear-gradient(90deg,#00ff98 14px,#0f7 182px,#02ff6f 210px,#63ff60 254px,#c9ff51 292px,#fffe48 310px,#ffc931 330px,#ff991c 356px,#ff6d09 392px,#ff5100 426px,#ff3800 470px)"></i><i style="background:linear-gradient(90deg,#00ff9b 14px,#00ff79 184px,#00ff72 208px,#5cff65 250px,#c1ff56 288px,#ffff4d 308px,#ffc935 328px,#ff991f 354px,#ff6d0b 390px,#ff4e00 428px,#ff3600 472px)"></i><i style="background:linear-gradient(90deg,#00ff9d 14px,#00ff7c 184px,#01ff75 208px,#64ff67 252px,#cbff58 290px,#fdff51 306px,#ffc536 328px,#ff9621 354px,#ff6b0d 390px,#ff4a00 432px,#f30 474px)"></i><i style="background:linear-gradient(90deg,#00ffa0 14px,#00ff7f 184px,#02ff78 208px,#61ff6b 250px,#caff5c 288px,#fcff55 304px,#ffe94b 312px,#ffb532 334px,#ff881d 362px,#ff5e09 402px,#ff4600 436px,#ff3000 478px)"></i><i style="background:linear-gradient(90deg,#00ffa2 16px,#00ff81 186px,#00ff7c 206px,#5fff6f 248px,#c2ff61 284px,#fffd58 304px,#ffcb40 322px,#ff9c29 346px,#ff7014 380px,#ff4901 428px,#ff2e00 480px)"></i><i style="background:linear-gradient(90deg,#00ffa4 16px,#00ff84 186px,#01ff7f 206px,#62ff72 248px,#c6ff65 284px,#fffe5d 302px,#fc4 320px,#ff9c2c 344px,#ff7016 378px,#ff4902 426px,#ff2c00 482px)"></i><i style="background:linear-gradient(90deg,#00ffa7 16px,#00ff87 188px,#00ff83 204px,#51ff78 240px,#b8ff6b 278px,#feff62 300px,#ffc745 320px,#ff992e 344px,#ff6e17 378px,#ff4703 426px,#ff3000 470px,#ff2900 486px)"></i><i style="background:linear-gradient(90deg,#00ffa9 16px,#00ff8a 188px,#00ff86 204px,#63ff7a 246px,#c9ff6d 282px,#fdff66 298px,#ffc347 320px,#ff932d 346px,#ff6716 382px,#ff4002 434px,#ff2700 488px)"></i><i style="background:linear-gradient(90deg,#00ffac 16px,#00ff8e 188px,#02ff8a 204px,#66ff7d 246px,#cdff71 282px,#fcff6b 296px,#ffef62 302px,#ffbb46 322px,#ff8d2d 348px,#ff6317 384px,#ff3e02 436px,#ff2500 490px)"></i><i style="background:linear-gradient(90deg,#00ffae 18px,#00ff90 192px,#00ff8d 202px,#59ff83 240px,#bfff77 276px,#fffd6e 296px,#ffc951 314px,#ff9937 338px,#ff6d1e 372px,#ff4608 420px,#ff3100 458px,#ff2300 492px)"></i><i style="background:linear-gradient(90deg,#00ffb1 18px,#00ff93 192px,#01ff91 202px,#61ff86 242px,#c3ff7b 276px,#fffe74 294px,#ffca56 312px,#ff993a 336px,#ff6f22 368px,#ff480c 414px,#ff2f00 460px,#ff2000 496px)"></i><i style="background:linear-gradient(90deg,#00ffb4 18px,#00ff96 194px,#02ff95 202px,#64ff8a 242px,#c8ff7f 276px,#feff79 292px,#ffca5a 310px,#ff993d 334px,#ff6e24 366px,#ff470d 412px,#ff2c00 462px,#ff1f00 498px)"></i><i style="background:linear-gradient(90deg,#00ffb7 18px,#00ff9a 194px,#0f9 200px,#5cff8f 238px,#c0ff84 272px,#fdff7e 290px,#ffc159 312px,#ff933d 336px,#ff6823 370px,#ff420c 418px,#ff2900 466px,#ff1d00 500px)"></i><i style="background:linear-gradient(90deg,#00ffb9 18px,#00ff9d 196px,#01ff9c 200px,#64ff92 240px,#cbff88 274px,#fbff83 288px,#ffee78 294px,#ffbd5a 312px,#ff903e 336px,#ff6524 370px,#ff3f0c 420px,#ff2600 470px,#ff1a00 504px)"></i><i style="background:linear-gradient(90deg,#00ffbc 20px,#00ffa1 198px,#47ff9a 228px,#a9ff90 262px,#fffd86 288px,#ffc764 306px,#ff9645 330px,#ff6b2a 362px,#ff4412 408px,#ff2500 470px,#ff1900 506px)"></i><i style="background:linear-gradient(90deg,#00ffbf 20px,#00ffa5 198px,#60ff9c 236px,#c7ff92 270px,#fffe8c 286px,#ffcd6c 302px,#ff9d4d 324px,#ff7131 354px,#ff4918 398px,#ff2701 462px,#ff1700 508px)"></i><i style="background:linear-gradient(90deg,#00ffc2 20px,#02ffa9 198px,#63ffa0 236px,#c5ff97 268px,#feff92 284px,#ffc86e 302px,#ff994f 324px,#ff6f33 354px,#ff4719 398px,#ff2502 464px,#ff1500 512px)"></i><i style="background:linear-gradient(90deg,#00ffc5 20px,#00ffad 196px,#4fffa6 228px,#b6ff9e 262px,#fdff98 282px,#ffc46f 302px,#ff9650 324px,#ff6a32 356px,#ff4318 402px,#ff2101 470px,#ff1300 514px)"></i><i style="background:linear-gradient(90deg,#00ffc8 20px,#00ffb1 196px,#63ffa9 234px,#c8ffa1 266px,#fbff9d 280px,#fff495 284px,#ffbf70 302px,#ff8f4f 326px,#ff6532 358px,#ff4018 404px,#ff1e01 474px,#f10 516px)"></i><i style="background:linear-gradient(90deg,#00ffcb 22px,#02ffb5 196px,#61ffae 232px,#c6ffa7 264px,#fffda1 280px,#ffca7d 296px,#ff995a 318px,#ff6e3b 348px,#ff4720 390px,#ff2507 454px,#ff1700 494px,#ff0f00 520px)"></i><i style="background:linear-gradient(90deg,#00ffce 22px,#00ffba 194px,#58ffb4 228px,#bdffad 260px,#ffffa8 278px,#ffcb82 294px,#ff995e 316px,#ff6d3e 346px,#ff4722 388px,#ff2408 452px,#ff1500 496px,#ff0e00 522px)"></i><i style="background:linear-gradient(90deg,#00ffd2 22px,#01ffbf 194px,#61ffb8 230px,#c9ffb1 262px,#feffae 276px,#ffc683 294px,#ff965f 316px,#ff6b3f 346px,#ff4322 390px,#ff2108 456px,#ff1200 500px,#ff0c00 524px)"></i><i style="background:linear-gradient(90deg,#00ffd5 22px,#00ffc3 192px,#3cffc0 216px,#9effba 248px,#fcffb4 274px,#ffc184 294px,#ff9261 316px,#ff6840 346px,#ff4223 390px,#ff2009 456px,#f10 502px,#ff0a00 528px)"></i><i style="background:linear-gradient(90deg,#00ffd8 24px,#00ffc8 192px,#5cffc3 226px,#beffbd 256px,#fbffba 272px,#fff4b1 276px,#ffc28a 292px,#ff9265 314px,#ff6843 344px,#ff4125 388px,#ff1f0a 454px,#ff0f00 506px,#ff0900 530px)"></i><i style="background:linear-gradient(90deg,#00ffdc 24px,#01ffcd 192px,#5fffc8 226px,#c3ffc3 256px,#fffdbe 272px,#ffc894 288px,#ff9a6f 308px,#ff6f4c 336px,#ff482d 376px,#ff2511 436px,#ff0e00 506px,#ff0700 532px)"></i><i style="background:linear-gradient(90deg,#00ffdf 24px,#00ffd2 190px,#45ffcf 216px,#acffca 248px,#ffffc6 270px,#ffc899 286px,#ff9a73 306px,#ff6e4f 334px,#ff472f 374px,#ff2513 434px,#ff0c00 508px,#ff0500 536px)"></i><i style="background:linear-gradient(90deg,#00ffe3 24px,#00ffd7 190px,#60ffd3 224px,#c7ffcf 254px,#feffcd 268px,#ffc39b 286px,#ff9674 306px,#ff6b50 334px,#ff4530 374px,#ff2313 434px,#ff0a00 512px,#ff0400 538px)"></i><i style="background:linear-gradient(90deg,#00ffe6 26px,#02ffdc 190px,#64ffd9 224px,#ccffd5 254px,#fcffd4 266px,#ffdcb6 276px,#ffab8b 294px,#ff7e64 318px,#ff5541 352px,#ff3122 402px,#ff1106 480px,#ff0600 524px,#ff0300 540px)"></i><i style="background:linear-gradient(90deg,#00ffea 26px,#00ffe2 188px,#4effdf 216px,#b3ffdc 246px,#faffda 264px,#fff3d0 268px,#ffbfa2 284px,#ff927a 304px,#ff6855 332px,#ff4233 372px,#ff2015 434px,#ff0700 516px,#ff0100 544px)"></i><i style="background:linear-gradient(90deg,#0fe 26px,#01ffe7 188px,#5effe5 220px,#c0ffe3 248px,#fffddf 264px,#ffcbb2 278px,#ff9a85 298px,#ff6f5f 324px,#ff483b 362px,#ff261c 418px,#ff0801 508px,#f00 546px)"></i><i style="background:linear-gradient(90deg,#00fff2 26px,#00ffed 186px,#19ffec 196px,#7cffea 228px,#e6ffe9 256px,#ffffe8 262px,#ffccb9 276px,#ff9e8e 294px,#ff7265 320px,#ff4b41 356px,#ff2821 410px,#ff0a05 496px,#f00 542px,#f00 548px)"></i><i style="background:linear-gradient(90deg,#00fff5 28px,#00fff2 186px,#58fff1 216px,#bbfff0 244px,#fdffef 260px,#ffc7ba 276px,#ff968b 296px,#ff6c64 322px,#ff453f 360px,#ff231e 418px,#ff0502 510px,#f00 552px)"></i><i style="background:linear-gradient(90deg,#00fffa 28px,#01fff8 186px,#62fff8 218px,#c9fff7 246px,#fcfff7 258px,#ffe9e2 264px,#ffb6b0 280px,#ff8782 302px,#ff5d59 332px,#ff3835 376px,#ff1715 444px,#f00 530px,#f00 554px)"></i><i style="background:linear-gradient(90deg,#00fffe 28px,#00fffe 184px,#38fffe 204px,#98fffe 232px,#fafffe 256px,#fffbfb 258px,#ffc8c7 272px,#ff9a9a 290px,#ff6e6e 316px,#ff4747 352px,#ff2525 406px,#ff0708 492px,#f00 542px,#f00 556px)"></i><i style="background:linear-gradient(90deg,#00fcff 28px,#00faff 184px,#5af9ff 214px,#bff9ff 242px,#faf8ff 256px,#fff4fb 258px,#ffc2c8 272px,#ff969b 290px,#ff6b6f 316px,#ff4548 352px,#ff2326 406px,#ff0608 492px,#f00 538px,#f00 560px)"></i><i style="background:linear-gradient(90deg,#00f8ff 30px,#02f4ff 184px,#62f3ff 216px,#c8f1ff 244px,#f9f1ff 256px,#ffeefc 258px,#ffbdc9 272px,#ff929c 290px,#ff6870 316px,#ff4349 352px,#ff2227 406px,#ff0509 492px,#f00 538px,#f00 562px)"></i><i style="background:linear-gradient(90deg,#00f4ff 30px,#0ef 182px,#49edff 208px,#b1ebff 238px,#ffe7fc 258px,#ffb8ca 272px,#ff8a99 292px,#ff626e 318px,#ff3d47 356px,#ff1e25 412px,#ff0207 502px,#f00 554px,#f00 564px)"></i><i style="background:linear-gradient(90deg,#00f0ff 30px,#00e9ff 182px,#64e6ff 216px,#c8e4ff 244px,#ffe0fd 258px,#ffb3cb 272px,#ff869a 292px,#ff5f6f 318px,#ff3b48 356px,#ff1c26 412px,#ff0108 502px,#f00 556px,#f00 566px)"></i><i style="background:linear-gradient(90deg,#00ecff 30px,#02e3ff 182px,#65e0ff 216px,#c8ddff 244px,#ffdafe 258px,#ffaecc 272px,#ff829b 292px,#ff5c70 318px,#ff3949 356px,#ff1b27 412px,#ff0009 502px,#f00 558px,#f00 570px)"></i><i style="background:linear-gradient(90deg,#00e8ff 32px,#00deff 180px,#54dbff 210px,#b9d7ff 240px,#ffd4fe 258px,#ffa9cd 272px,#ff7e9c 292px,#ff5971 318px,#ff374a 356px,#ff1928 412px,#ff000a 500px,#f00 562px,#f00 572px)"></i><i style="background:linear-gradient(90deg,#00e4ff 32px,#01d9ff 180px,#61d5ff 214px,#c8d0ff 244px,#ffcdff 258px,#ffa4ce 272px,#ff7a9d 292px,#ff5470 320px,#ff3449 358px,#ff1627 416px,#ff000b 498px,#f00 564px,#f00 574px)"></i><i style="background:linear-gradient(90deg,#00e0ff 32px,#03d3ff 180px,#62cfff 214px,#c8caff 244px,#ffc7ff 258px,#ff9ac9 274px,#ff739a 294px,#ff4f6e 322px,#ff2f47 362px,#ff1225 422px,#ff000d 494px,#f00 566px,#f00 578px)"></i><i style="background:linear-gradient(90deg,#0df 34px,#00cfff 178px,#57caff 210px,#bac5ff 240px,#fec1ff 258px,#ff96c9 274px,#ff709b 294px,#ff4d6f 322px,#ff2d48 362px,#ff1126 422px,#ff000f 490px,#f00 570px,#f00 580px)"></i><i style="background:linear-gradient(90deg,#00d9ff 34px,#01caff 178px,#64c4ff 214px,#c8beff 244px,#febbff 258px,#ff8dc5 276px,#ff6694 298px,#ff4469 328px,#ff2643 370px,#ff0c21 434px,#ff0010 488px,#f00 572px,#f00 582px)"></i><i style="background:linear-gradient(90deg,#00d5ff 34px,#00c5ff 176px,#42c1ff 202px,#a6baff 234px,#fdb5ff 258px,#ff88c6 276px,#ff6395 298px,#ff426a 328px,#ff2444 370px,#ff0a22 434px,#ff0012 484px,#f00 574px,#f00 586px)"></i><i style="background:linear-gradient(90deg,#00d2ff 34px,#00c0ff 176px,#61b9ff 212px,#c9b2ff 244px,#fdafff 258px,#ff80c1 278px,#ff5d93 300px,#ff3e69 330px,#ff2142 374px,#ff0721 440px,#ff0013 482px,#f00 576px,#f00 588px)"></i><i style="background:linear-gradient(90deg,#00ceff 36px,#02bbff 176px,#62b4ff 212px,#c9adff 244px,#fda9ff 258px,#ff7cc2 278px,#ff5a94 300px,#ff3b6a 330px,#ff1f43 374px,#ff0621 440px,#ff0014 480px,#f00 580px,#f00 590px)"></i><i style="background:linear-gradient(90deg,#00caff 36px,#00b7ff 174px,#4cb1ff 204px,#ada9ff 236px,#fca3ff 258px,#ff84d3 272px,#ff61a3 292px,#ff4177 320px,#ff244e 360px,#ff0b2b 418px,#ff0018 468px,#f00 578px,#f00 594px)"></i><i style="background:linear-gradient(90deg,#00c7ff 36px,#00b3ff 174px,#64aaff 212px,#c9a2ff 244px,#fc9eff 258px,#ff91ed 264px,#ff6dba 282px,#ff4d8c 306px,#ff2f61 340px,#ff153c 388px,#ff001c 458px,#f00 576px,#f00 596px)"></i><i style="background:linear-gradient(90deg,#00c3ff 38px,#02aeff 174px,#65a5ff 212px,#c99dff 244px,#fb98ff 258px,#ff90f4 262px,#ff6dbf 280px,#ff4c90 304px,#ff3066 336px,#ff1641 382px,#ff001f 452px,#ff0002 566px,#f00 598px)"></i><i style="background:linear-gradient(90deg,#00bfff 38px,#0af 172px,#55a2ff 206px,#bc99ff 240px,#fb93ff 258px,#ff8cf5 262px,#ff69c0 280px,#ff4991 304px,#ff2d67 336px,#ff1340 384px,#ff0021 450px,#ff0004 562px,#f00 600px)"></i><i style="background:linear-gradient(90deg,#00bcff 38px,#01a6ff 172px,#619cff 210px,#c992ff 244px,#ff8bfc 260px,#ff6ccb 276px,#ff4d9c 298px,#ff3171 328px,#ff1749 372px,#ff0026 438px,#ff0008 542px,#f00 602px)"></i><i style="background:linear-gradient(90deg,#00b9ff 38px,#02a1ff 172px,#6298ff 210px,#c98dff 244px,#ff87fd 260px,#ff64c7 278px,#ff4596 302px,#ff2a6b 334px,#ff1244 380px,#ff0025 442px,#ff0008 548px,#f00 602px)"></i><i style="background:linear-gradient(90deg,#00b5ff 40px,#009eff 170px,#5d94ff 208px,#c389ff 242px,#ff82fd 260px,#ff61c8 278px,#ff4297 302px,#ff286c 334px,#ff1045 380px,#ff0027 438px,#ff0009 542px,#f00 602px)"></i><i style="background:linear-gradient(90deg,#00b2ff 40px,#019aff 170px,#648fff 210px,#c984ff 244px,#ff7dfe 260px,#ff5dc8 278px,#ff4098 302px,#ff266d 334px,#ff0f46 380px,#ff002b 432px,#ff000c 532px,#f00 596px)"></i><i style="background:linear-gradient(90deg,#00afff 40px,#0096ff 168px,#4a8dff 200px,#b082ff 236px,#ff79fe 260px,#ff59c9 278px,#ff3d98 302px,#ff246e 334px,#ff0d47 380px,#ff002d 428px,#ff000e 526px,#ff0002 590px)"></i><i style="background:linear-gradient(90deg,#00abff 42px,#0092ff 168px,#6087ff 208px,#c37bff 242px,#ff74ff 260px,#ff56ca 278px,#ff3a99 302px,#ff226f 334px,#ff0b48 380px,#ff0030 424px,#f01 518px,#ff0003 584px)"></i><i style="background:linear-gradient(90deg,#00a8ff 42px,#028eff 168px,#6183ff 208px,#ca76ff 244px,#ff70ff 260px,#ff52ca 278px,#ff379a 302px,#ff1f6f 334px,#ff0a49 380px,#ff0032 420px,#ff0013 512px,#ff0004 580px)"></i><i style="background:linear-gradient(90deg,#00a5ff 42px,#008bff 166px,#5380ff 202px,#b774ff 238px,#ff6bff 260px,#ff4fcb 278px,#ff359b 302px,#ff1d70 334px,#ff0849 380px,#ff0035 416px,#ff0015 506px,#ff0006 574px)"></i><i style="background:linear-gradient(90deg,#00a1ff 44px,#0087ff 166px,#637aff 208px,#ca6dff 244px,#fe66ff 260px,#ff49c7 280px,#ff3099 304px,#ff196d 338px,#ff0546 386px,#ff0035 418px,#ff0015 508px,#ff0008 568px)"></i><i style="background:linear-gradient(90deg,#009eff 44px,#0283ff 166px,#6476ff 208px,#ca69ff 244px,#fe62ff 260px,#ff45c8 280px,#ff2d99 304px,#ff176e 338px,#ff0347 386px,#ff002b 442px,#ff000c 548px,#ff0009 562px)"></i><i style="background:linear-gradient(90deg,#009bff 44px,#0080ff 164px,#5674ff 202px,#be66ff 240px,#fd5eff 260px,#ff40c4 282px,#ff2894 308px,#ff1269 344px,#ff0042 396px,#ff0020 474px,#ff000b 556px)"></i><i style="background:linear-gradient(90deg,#0098ff 46px,#017dff 164px,#616fff 206px,#c461ff 242px,#fd59ff 260px,#ff3dc5 282px,#ff2595 308px,#ff106a 344px,#ff0045 392px,#ff0023 468px,#ff000c 552px)"></i><i style="background:linear-gradient(90deg,#0095ff 46px,#0279ff 164px,#626bff 206px,#ca5dff 244px,#fd55ff 260px,#ff37c1 284px,#ff2193 310px,#ff0d68 346px,#ff0048 388px,#ff0025 462px,#ff000e 546px)"></i><i style="background:linear-gradient(90deg,#0092ff 46px,#0076ff 162px,#5e68ff 204px,#c459ff 242px,#fc51ff 260px,#ff3bcf 278px,#ff25a0 302px,#ff1073 336px,#ff004d 382px,#ff002a 452px,#ff0010 540px)"></i><i style="background:linear-gradient(90deg,#008fff 48px,#0173ff 162px,#6364ff 206px,#ca55ff 244px,#fc4dff 260px,#ff43ea 268px,#ff2cb6 290px,#ff1787 320px,#ff035c 362px,#ff0043 400px,#ff0021 480px,#ff0012 534px)"></i><i style="background:linear-gradient(90deg,#008cff 48px,#0070ff 160px,#5163ff 198px,#b953ff 238px,#fb49ff 260px,#ff42f0 266px,#ff2dbf 286px,#ff188f 314px,#ff0565 352px,#ff0050 380px,#ff002c 450px,#ff0014 528px)"></i><i style="background:linear-gradient(90deg,#0089ff 48px,#006dff 160px,#605eff 204px,#c54eff 242px,#ff44fd 262px,#ff2dc8 282px,#ff1999 308px,#ff076e 344px,#ff0056 372px,#ff0031 438px,#ff0016 524px)"></i><i style="background:linear-gradient(90deg,#0085ff 50px,#0169ff 160px,#615aff 204px,#c54aff 242px,#ff40fd 262px,#ff2ac9 282px,#ff179a 308px,#ff056e 344px,#ff0058 370px,#ff0034 434px,#ff0018 518px)"></i><i style="background:linear-gradient(90deg,#0083ff 50px,#0067ff 158px,#5459ff 198px,#ba48ff 238px,#ff3cfd 262px,#ff27c9 282px,#ff159a 308px,#ff036f 344px,#ff004d 388px,#ff0029 462px,#ff001a 512px)"></i><i style="background:linear-gradient(90deg,#0080ff 50px,#0063ff 158px,#6353ff 204px,#cb42ff 244px,#ff39fe 262px,#ff25ca 282px,#ff129b 308px,#ff0170 344px,#ff0049 396px,#ff0026 474px,#ff001c 506px)"></i><i style="background:linear-gradient(90deg,#007dff 52px,#0260ff 158px,#6450ff 204px,#cb3eff 244px,#ff35fe 262px,#ff22cb 282px,#ff0f99 310px,#ff006d 348px,#ff0046 402px,#ff0023 484px,#ff001e 500px)"></i><i style="background:linear-gradient(90deg,#007aff 52px,#005eff 156px,#5b4eff 200px,#c03dff 240px,#ff32ff 262px,#ff1fcb 282px,#ff0d9a 310px,#ff0071 344px,#ff004a 396px,#ff0027 474px,#ff0020 496px)"></i><i style="background:linear-gradient(90deg,#07f 52px,#015bff 156px,#614aff 202px,#c538ff 242px,#ff2eff 262px,#ff1ccc 282px,#ff0b9a 310px,#ff0076 340px,#ff004e 390px,#ff002b 464px,#ff0023 490px)"></i><i style="background:linear-gradient(90deg,#0074ff 54px,#0258ff 156px,#6646ff 204px,#cb34ff 244px,#ff2bff 262px,#ff18c8 284px,#ff0798 312px,#ff007b 336px,#ff0053 384px,#ff002f 456px,#ff0025 484px)"></i><i style="background:linear-gradient(90deg,#0072ff 54px,#05f 154px,#5e44ff 200px,#c532ff 242px,#fe27ff 262px,#ff15c9 284px,#ff0599 312px,#ff007e 334px,#f05 382px,#ff0031 452px,#ff0028 478px)"></i><i style="background:linear-gradient(90deg,#006eff 56px,#0153ff 154px,#6341ff 202px,#cb2eff 244px,#fe24ff 262px,#ff11c5 286px,#ff0194 316px,#ff006a 356px,#ff0043 414px,#ff002a 474px)"></i><i style="background:linear-gradient(90deg,#006cff 56px,#0250ff 154px,#643dff 202px,#cb2aff 244px,#fe21ff 262px,#ff0fc6 286px,#ff0095 316px,#ff006a 356px,#f04 414px,#ff002c 468px)"></i><i style="background:linear-gradient(90deg,#0069ff 56px,#004dff 152px,#603bff 200px,#c628ff 242px,#fd1eff 262px,#ff0bc3 288px,#ff0096 316px,#ff006b 356px,#f04 414px,#ff002f 462px)"></i><i style="background:linear-gradient(90deg,#06f 58px,#014bff 152px,#6537ff 202px,#cb24ff 244px,#fd1aff 262px,#ff08c3 288px,#ff009c 312px,#ff006f 352px,#ff0048 408px,#ff0032 456px)"></i><i style="background:linear-gradient(90deg,#0064ff 58px,#0049ff 150px,#5937ff 196px,#c123ff 240px,#fd17ff 262px,#ff05c0 290px,#ff009f 310px,#ff0074 348px,#ff004c 402px,#ff0035 450px)"></i><i style="background:linear-gradient(90deg,#0061ff 60px,#0046ff 150px,#6332ff 200px,#cb1eff 244px,#fc14ff 262px,#ff06cc 284px,#ff00a9 304px,#ff007c 340px,#ff0053 392px,#ff0037 446px)"></i><i style="background:linear-gradient(90deg,#005eff 60px,#0243ff 150px,#6330ff 200px,#cb1bff 244px,#ff10fc 264px,#ff02c9 286px,#f09 316px,#ff006c 358px,#ff0045 418px,#ff003a 440px)"></i><i style="background:linear-gradient(90deg,#005cff 60px,#0041ff 148px,#5c2fff 196px,#c11aff 240px,#ff0dfd 264px,#ff00c9 286px,#f09 316px,#ff006d 358px,#ff0045 418px,#ff003e 434px)"></i><i style="background:linear-gradient(90deg,#0059ff 62px,#013eff 148px,#652aff 200px,#cb15ff 244px,#ff0afd 264px,#ff00ca 286px,#ff009a 316px,#ff006e 358px,#ff0046 418px,#ff0041 428px)"></i><i style="background:linear-gradient(90deg,#0057ff 62px,#023cff 148px,#6527ff 200px,#cb12ff 244px,#ff07fd 264px,#ff00d3 282px,#ff00a3 310px,#ff0075 350px,#ff004d 406px,#ff0045 422px)"></i><i style="background:linear-gradient(90deg,#0054ff 64px,#003aff 146px,#6225ff 198px,#c610ff 242px,#ff04fe 264px,#ff00d3 282px,#ff00a3 310px,#ff0076 350px,#ff004e 406px,#ff0047 418px)"></i><i style="background:linear-gradient(90deg,#0051ff 64px,#0137ff 146px,#6323ff 198px,#cb0dff 244px,#ff02fe 264px,#ff00c8 288px,#ff0097 320px,#ff006b 364px,#ff004b 412px)"></i><i style="background:linear-gradient(90deg,#004eff 66px,#0235ff 146px,#6320ff 198px,#cc0aff 244px,#f0f 264px,#ff00c8 288px,#ff0097 320px,#ff006b 364px,#ff004f 406px)"></i><i style="background:linear-gradient(90deg,#004cff 66px,#03f 144px,#641eff 198px,#cc07ff 244px,#f0f 264px,#ff00c9 288px,#ff0098 320px,#ff006c 364px,#ff0053 400px)"></i><i style="background:linear-gradient(90deg,#0049ff 68px,#0131ff 144px,#651bff 198px,#cc05ff 244px,#f900ff 262px,#f0f 264px,#ff00ca 288px,#f09 320px,#ff006d 364px,#ff0058 394px)"></i><i style="background:linear-gradient(90deg,#0047ff 68px,#002fff 142px,#5a1bff 192px,#c204ff 240px,#f400ff 260px,#fe00ff 264px,#ff00c6 290px,#ff0097 322px,#ff006c 366px,#ff005b 390px)"></i><i style="background:linear-gradient(90deg,#04f 70px,#002dff 142px,#6217ff 196px,#c700ff 242px,#fe00ff 264px,#ff00c7 290px,#ff0098 322px,#ff006c 366px,#ff005f 384px)"></i><i style="background:linear-gradient(90deg,#0042ff 70px,#022aff 142px,#6314ff 196px,#c700ff 242px,#fe00ff 264px,#ff00c4 292px,#ff0093 326px,#ff0068 372px,#ff0064 378px)"></i><i style="background:linear-gradient(90deg,#003fff 72px,#0029ff 140px,#5c14ff 192px,#be00ff 238px,#fe00ff 264px,#ff00c5 292px,#ff0094 326px,#ff0069 372px)"></i><i style="background:linear-gradient(90deg,#003dff 72px,#0126ff 140px,#6410ff 196px,#b500ff 234px,#fd00ff 264px,#ff00c5 292px,#ff0095 326px,#ff006e 366px)"></i><i style="background:linear-gradient(90deg,#003bff 72px,#0224ff 140px,#650dff 196px,#ac00ff 230px,#fd00ff 264px,#ff00c2 294px,#ff0093 328px,#ff0072 362px)"></i><i style="background:linear-gradient(90deg,#0038ff 74px,#0023ff 138px,#620cff 194px,#9f00ff 224px,#fd00ff 264px,#ff00c3 294px,#ff0094 328px,#ff0078 356px)"></i><i style="background:linear-gradient(90deg,#0036ff 74px,#0120ff 138px,#6209ff 194px,#9700ff 220px,#ff00fd 266px,#ff00c7 292px,#ff0097 326px,#ff007e 350px)"></i><i style="background:linear-gradient(90deg,#03f 76px,#021eff 138px,#6307ff 194px,#9300ff 218px,#ff00fd 266px,#ff00c7 292px,#ff0097 326px,#ff0084 344px)"></i><i style="background:linear-gradient(90deg,#0031ff 76px,#001dff 136px,#6405ff 194px,#8f00ff 216px,#f700ff 262px,#ff00fd 266px,#ff00c8 292px,#ff0098 326px,#ff008b 338px)"></i><i style="background:linear-gradient(90deg,#002eff 78px,#011bff 136px,#6403ff 194px,#c0f 244px,#ff00fe 266px,#ff00c8 292px,#ff0098 326px,#ff0090 334px)"></i><i style="background:linear-gradient(90deg,#002cff 78px,#0218ff 136px,#6500ff 194px,#c0f 244px,#ff00fe 266px,#ff00c9 292px,#f09 326px,#ff0097 328px)"></i><i style="background:linear-gradient(90deg,#002aff 80px,#0117ff 134px,#6200ff 192px,#c800ff 242px,#ff00fe 266px,#ff00c9 292px,#ff009e 322px)"></i><i style="background:linear-gradient(90deg,#0027ff 82px,#0215ff 134px,#6300ff 192px,#c800ff 242px,#f0f 266px,#ff00ca 292px,#ff00a6 316px)"></i><i style="background:linear-gradient(90deg,#0025ff 82px,#0014ff 132px,#5800ff 186px,#bf00ff 238px,#f0f 266px,#ff00ca 292px,#ff00af 310px)"></i><i style="background:linear-gradient(90deg,#02f 84px,#0112ff 132px,#5200ff 182px,#b700ff 234px,#f0f 266px,#ff00cb 292px,#ff00b5 306px)"></i><i style="background:linear-gradient(90deg,#0021ff 84px,#0210ff 132px,#4c00ff 178px,#b300ff 232px,#f0f 266px,#ff00c8 294px,#ff00be 300px)"></i><i style="background:linear-gradient(90deg,#001eff 86px,#000eff 130px,#4200ff 172px,#a600ff 226px,#fe00ff 266px,#ff00c8 294px)"></i><i style="background:linear-gradient(90deg,#001cff 86px,#010cff 130px,#3c00ff 168px,#a300ff 224px,#fe00ff 266px,#ff00d3 288px)"></i><i style="background:linear-gradient(90deg,#0019ff 88px,#020bff 130px,#3700ff 164px,#9b00ff 220px,#fe00ff 266px,#ff00de 282px)"></i><i style="background:linear-gradient(90deg,#0018ff 88px,#0009ff 128px,#3100ff 160px,#9700ff 218px,#fd00ff 266px,#ff00e7 278px)"></i><i style="background:linear-gradient(90deg,#0015ff 90px,#0107ff 128px,#2c00ff 156px,#9000ff 214px,#f900ff 264px,#ff00f8 270px,#ff00f3 272px)"></i><i style="background:linear-gradient(90deg,#0012ff 92px,#0206ff 128px,#2900ff 154px,#8d00ff 212px,#f400ff 262px,#fd00ff 266px)"></i><i style="background:linear-gradient(90deg,#01f 92px,#0104ff 126px,#2700ff 152px,#8d00ff 212px,#ef00ff 260px)"></i><i style="background:linear-gradient(90deg,#000eff 94px,#0203ff 126px,#6200ff 188px,#c800ff 242px,#e200ff 254px)"></i><i style="background:linear-gradient(90deg,#000cff 96px,#0301ff 126px,#60f 190px,#cd00ff 244px,#d900ff 250px)"></i><i style="background:linear-gradient(90deg,#000aff 96px,#0100ff 124px,#6400ff 188px,#cd00ff 244px)"></i><i style="background:linear-gradient(90deg,#0007ff 98px,#0200ff 124px,#6400ff 188px,#c100ff 238px)"></i><i style="background:linear-gradient(90deg,#0005ff 100px,#00f 122px,#6100ff 186px,#b500ff 232px)"></i><i style="background:linear-gradient(90deg,#0002ff 102px,#0100ff 122px,#6200ff 186px,#ad00ff 228px)"></i><i style="background:linear-gradient(90deg,#0001ff 102px,#0200ff 122px,#60f 188px,#a200ff 222px)"></i><i style="background:linear-gradient(90deg,#00f 104px,#0300ff 122px,#6700ff 188px,#9700ff 216px)"></i><i style="background:linear-gradient(90deg,#00f 106px,#0100ff 120px,#6400ff 186px,#8d00ff 210px)"></i><i style="background:linear-gradient(90deg,#00f 108px,#0200ff 120px,#6400ff 186px,#8300ff 204px)"></i><i style="background:linear-gradient(90deg,#00f 110px,#0300ff 120px,#6500ff 186px,#7c00ff 200px)"></i><i style="background:linear-gradient(90deg,#00f 112px,#0400ff 120px,#6500ff 186px,#7300ff 194px)"></i><i style="background:linear-gradient(90deg,#00f 114px,#1e00ff 138px,#6900ff 188px)"></i><i style="background:linear-gradient(90deg,#0300ff 118px,#6000ff 182px)"></i><i style="background:linear-gradient(90deg,#0700ff 120px,#5700ff 176px)"></i><i style="background:linear-gradient(90deg,#0b00ff 122px,#5200ff 172px)"></i><i style="background:linear-gradient(90deg,#10f 126px,#4900ff 166px)"></i><i style="background:linear-gradient(90deg,#1400ff 128px,#4100ff 160px)"></i><i style="background:linear-gradient(90deg,#1b00ff 132px,#3900ff 154px)"></i><i style="background:linear-gradient(90deg,#1e00ff 134px,#3100ff 148px)"></i><i></i>
</div>
<div id="ins" style="position:absolute;overflow:hidden;left:1600.8px;top:153.7px;width:233.5px;height:196.8px"><i style="background:linear-gradient(90deg,#b2ff00 0px,#feff00 184px,#ffe900 240px)"></i><i style="background:linear-gradient(90deg,#b3ff00 0px,#ff0 184px,#ffe800 240px)"></i><i style="background:linear-gradient(90deg,#b4ff00 0px,#fffe00 184px,#ffe800 240px)"></i><i style="background:linear-gradient(90deg,#b4ff00 0px,#fffd00 184px,#ffe700 240px)"></i><i style="background:linear-gradient(90deg,#b5ff00 0px,#feff00 176px,#ffe600 240px)"></i><i style="background:linear-gradient(90deg,#b6ff00 0px,#ff0 176px,#ffe500 240px)"></i><i style="background:linear-gradient(90deg,#b7ff00 0px,#fffe00 176px,#ffe400 240px)"></i><i style="background:linear-gradient(90deg,#b7ff00 0px,#fffd00 176px,#ffe300 240px)"></i><i style="background:linear-gradient(90deg,#b8ff01 0px,#feff00 168px,#ffe300 240px)"></i><i style="background:linear-gradient(90deg,#b9ff01 0px,#ff0 168px,#ffe200 240px)"></i><i style="background:linear-gradient(90deg,#baff01 0px,#fffe00 168px,#ffe100 240px)"></i><i style="background:linear-gradient(90deg,#baff02 0px,#feff00 160px,#ffe000 240px)"></i><i style="background:linear-gradient(90deg,#bbff02 0px,#ff0 160px,#ffdf00 240px)"></i><i style="background:linear-gradient(90deg,#bcff03 0px,#f1ff00 128px,#fffe00 160px,#ffde00 240px)"></i><i style="background:linear-gradient(90deg,#bdff03 0px,#ebff00 112px,#fffe00 160px,#ffde00 240px)"></i><i style="background:linear-gradient(90deg,#bdff03 0px,#e2ff00 88px,#feff00 152px,#fd0 240px)"></i><i style="background:linear-gradient(90deg,#beff04 0px,#e6ff00 96px,#ff0 152px,#ffdc00 240px)"></i><i style="background:linear-gradient(90deg,#bfff04 0px,#e4ff00 88px,#fffe00 152px,#ffdb00 240px)"></i><i style="background:linear-gradient(90deg,#c0ff05 0px,#e8ff00 96px,#fffd00 152px,#ffda00 240px)"></i><i style="background:linear-gradient(90deg,#c1ff05 0px,#e5ff00 88px,#feff00 144px,#ffd900 240px)"></i><i style="background:linear-gradient(90deg,#c1ff06 0px,#eaff00 96px,#ff0 144px,#ffd900 240px)"></i><i style="background:linear-gradient(90deg,#c2ff06 0px,#ebff00 96px,#fffe00 144px,#ffd800 240px)"></i><i style="background:linear-gradient(90deg,#c3ff06 0px,#efff00 104px,#fffd00 144px,#ffd700 240px)"></i><i style="background:linear-gradient(90deg,#c4ff07 0px,#f0ff00 104px,#feff00 136px,#ffd600 240px)"></i><i style="background:linear-gradient(90deg,#c4ff07 0px,#f1ff00 104px,#ff0 136px,#ffd500 240px)"></i><i style="background:linear-gradient(90deg,#c5ff08 0px,#f6ff00 112px,#fffe00 136px,#ffd500 240px)"></i><i style="background:linear-gradient(90deg,#c6ff08 0px,#f7ff00 112px,#fffd00 136px,#ffd400 240px)"></i><i style="background:linear-gradient(90deg,#c7ff09 0px,#fbff00 120px,#fffc00 136px,#ffd300 240px)"></i><i style="background:linear-gradient(90deg,#c8ff09 0px,#fcff00 120px,#fff700 144px,#ffd200 240px)"></i><i style="background:linear-gradient(90deg,#c9ff09 0px,#fffd00 128px,#ffd100 240px)"></i><i style="background:linear-gradient(90deg,#c9ff0a 0px,#feff00 120px,#ffd100 240px)"></i><i style="background:linear-gradient(90deg,#caff0a 0px,#ff0 120px,#ffd000 240px)"></i><i style="background:linear-gradient(90deg,#cbff0b 0px,#fffe00 120px,#ffcf00 240px)"></i><i style="background:linear-gradient(90deg,#ccff0b 0px,#fffd00 120px,#ffce00 240px)"></i><i style="background:linear-gradient(90deg,#cdff0c 0px,#feff01 112px,#ffcd00 240px)"></i><i style="background:linear-gradient(90deg,#ceff0c 0px,#ffff02 112px,#ffcf00 232px,#ffcd00 240px)"></i><i style="background:linear-gradient(90deg,#ceff0d 0px,#fffe02 112px,#ffce00 232px,#fc0 240px)"></i><i style="background:linear-gradient(90deg,#cfff0d 0px,#feff03 104px,#ffdc00 192px,#ffcb00 240px)"></i><i style="background:linear-gradient(90deg,#d0ff0d 0px,#ffff04 104px,#ffde00 184px,#ffca00 240px)"></i><i style="background:linear-gradient(90deg,#d1ff0e 0px,#fffe04 104px,#fd0 184px,#ffc900 240px)"></i><i style="background:linear-gradient(90deg,#d2ff0e 0px,#fffd05 104px,#ffdc00 184px,#ffc900 240px)"></i><i style="background:linear-gradient(90deg,#d3ff0f 0px,#feff06 96px,#ffdb00 184px,#ffc800 240px)"></i><i style="background:linear-gradient(90deg,#d4ff0f 0px,#ffff06 96px,#ffda00 184px,#ffc700 240px)"></i><i style="background:linear-gradient(90deg,#d4ff10 0px,#fffe07 96px,#ffd700 192px,#ffc600 240px)"></i><i style="background:linear-gradient(90deg,#d5ff10 0px,#fffd07 96px,#ffd600 192px,#ffc600 240px)"></i><i style="background:linear-gradient(90deg,#d6ff11 0px,#feff09 88px,#ffd200 200px,#ffc500 240px)"></i><i style="background:linear-gradient(90deg,#d7ff11 0px,#ffff09 88px,#ffd100 200px,#ffc400 240px)"></i><i style="background:linear-gradient(90deg,#d8ff12 0px,#fffe09 88px,#ffce00 208px,#ffc300 240px)"></i><i style="background:linear-gradient(90deg,#d9ff12 0px,#feff0b 80px,#ffcd00 208px,#ffc200 240px)"></i><i style="background:linear-gradient(90deg,#daff13 0px,#ffff0b 80px,#ffcf00 200px,#ffc200 240px)"></i><i style="background:linear-gradient(90deg,#dbff13 0px,#fffe0c 80px,#ffce00 200px,#ffc100 240px)"></i><i style="background:linear-gradient(90deg,#dcff14 0px,#fffd0c 80px,#ffcd00 200px,#ffc000 240px)"></i><i style="background:linear-gradient(90deg,#ddff14 0px,#feff0d 72px,#ffca00 208px,#ffbf00 240px)"></i><i style="background:linear-gradient(90deg,#ddff15 0px,#ffff0e 72px,#ffce02 192px,#ffbf00 240px)"></i><i style="background:linear-gradient(90deg,#deff15 0px,#fffe0e 72px,#ffcd02 192px,#ffbe00 240px)"></i><i style="background:linear-gradient(90deg,#dfff16 0px,#fffd0f 72px,#ffcd02 192px,#ffbd00 240px)"></i><i style="background:linear-gradient(90deg,#e0ff16 0px,#feff10 64px,#ffcc03 192px,#ffbc00 240px)"></i><i style="background:linear-gradient(90deg,#e1ff17 0px,#ff1 64px,#ffd105 176px,#ffbc00 240px)"></i><i style="background:linear-gradient(90deg,#e2ff17 0px,#fffe11 64px,#ffcd04 184px,#fb0 240px)"></i><i style="background:linear-gradient(90deg,#e3ff18 0px,#fdff12 56px,#ffc904 192px,#ffba00 240px)"></i><i style="background:linear-gradient(90deg,#e4ff18 0px,#ffff13 56px,#ffce06 176px,#ffb900 240px)"></i><i style="background:linear-gradient(90deg,#e5ff19 0px,#fffe13 56px,#ffd007 168px,#ffb900 240px)"></i><i style="background:linear-gradient(90deg,#e6ff19 0px,#fffd14 56px,#ffcf07 168px,#ffb801 240px)"></i><i style="background:linear-gradient(90deg,#e7ff1a 0px,#feff15 48px,#ffc906 184px,#ffb701 240px)"></i><i style="background:linear-gradient(90deg,#e8ff1a 0px,#ffff16 48px,#ffce08 168px,#ffb602 240px)"></i><i style="background:linear-gradient(90deg,#e9ff1b 0px,#fffe16 48px,#ffd009 160px,#ffb602 240px)"></i></div>
<svg width="1920" height="1039" viewBox="0 0 1920 1039" style="z-index:3"><path d="M1292.0,666.7 L1291.7,666.6 L1291.2,666.5 L1290.6,666.3 L1290.0,666.0 L1289.2,665.5 L1288.4,665.0 L1287.4,664.3 L1286.3,663.5 L1284.8,662.5 L1283.1,661.4 L1281.4,660.3 L1279.9,659.3 L1278.6,658.4 L1277.5,657.7 L1276.5,657.0 L1275.3,656.1 L1273.9,655.2 L1272.5,654.2 L1271.1,653.0 L1269.5,651.8 L1267.9,650.4 L1266.3,649.0 L1264.5,647.4 L1262.5,645.4 L1260.4,643.1 L1258.2,640.6 L1255.8,637.7 L1253.2,634.3 L1250.5,630.5 L1247.6,626.3 L1244.5,621.6 L1241.3,616.2 L1237.8,610.1 L1234.2,603.4 L1230.3,595.9 L1226.3,587.6 L1221.9,578.3 L1217.2,568.2 L1212.5,557.2 L1207.7,545.2 L1202.9,532.0 L1198.1,517.7 L1193.3,502.5 L1188.6,486.4 L1183.9,469.2 L1179.2,450.9 L1174.7,432.0 L1170.6,413.0 L1166.9,393.6 L1163.4,373.7 L1160.4,353.9 L1158.0,334.6 L1156.2,315.7 L1155.0,297.1 L1154.3,279.1 L1154.5,262.0 L1155.4,245.7 L1157.1,230.1 L1159.5,215.6 L1162.7,202.6 L1166.8,191.0 L1171.7,180.8 L1177.2,172.1 L1183.2,165.0 L1189.8,159.6 L1197.0,155.9 L1204.6,153.5 L1212.3,152.0 L1220.2,151.7 L1228.4,152.6 L1236.7,154.3 L1245.1,156.2 L1253.4,158.5 L1261.8,161.3 L1270.1,164.5 L1278.3,167.8 L1286.3,171.3 L1294.2,175.1 L1302.0,179.0 L1309.7,183.0 L1317.3,187.1 L1324.8,191.3 L1332.3,195.6 L1339.8,200.0 L1347.3,204.5 L1354.7,209.2 L1362.1,213.9 L1369.5,218.7 L1376.9,223.6 L1384.2,228.5 L1391.6,233.6 L1398.9,238.7 L1406.2,243.8 L1413.6,249.0 L1420.9,254.2 L1428.2,259.5 L1435.6,264.8 L1442.9,270.1 L1450.3,275.5 L1457.6,280.9 L1464.9,286.3 L1472.2,291.8 L1479.6,297.2 L1486.8,302.7 L1494.1,308.1 L1501.4,313.6 L1508.7,319.0 L1515.9,324.4 L1523.1,329.9 L1530.2,335.3 L1537.3,340.6 L1544.4,346.0 L1551.4,351.3 L1558.4,356.5 L1565.2,361.7 L1572.1,366.9 L1578.8,372.0 L1585.5,377.1 L1592.1,382.1 L1598.6,387.0 L1605.0,391.8 L1611.3,396.6 L1617.5,401.2 L1623.5,405.8 L1629.4,410.3 L1635.2,414.7 L1640.9,419.0 L1646.3,423.1 L1651.5,427.0 L1656.5,430.8 L1661.4,434.5 L1666.1,438.0 L1670.7,441.5 L1675.1,444.9 L1679.4,448.1 L1683.5,451.2 L1687.4,454.1 L1691.1,456.9 L1694.6,459.5 L1697.9,462.1 L1701.1,464.5 L1704.1,466.7 L1707.0,468.9 L1709.7,471.0 L1712.1,472.8 L1714.2,474.4 L1716.4,476.1 L1719.0,478.1 L1722.2,480.5 L1725.8,483.2 L1729.3,485.9 L1732.5,488.2 L1735.1,490.3 L1737.5,492.1 L1739.7,493.7 L1741.6,495.2 L1743.3,496.4 L1744.8,497.5 L1746.2,498.5 L1747.3,499.5 L1748.4,500.4 L1749.3,501.4 L1750.0,502.1 L1750.5,502.7 Z M1676.7,464.5 L1397.6,296.2 L1274.5,632.9 Z" fill="#000" fill-opacity=".4" fill-rule="evenodd"/><path d="M1600.8,153.7 L1834.3,153.7 L1834.3,329.9 L1600.8,174.6 Z" fill="#000" fill-opacity=".4"/><rect x="1600.8" y="153.7" width="233.5" height="196.8" fill="none" stroke="#9a9a9a" stroke-width="1.6"/><rect x="1709.1" y="243.9" width="14.4" height="14.4" fill="none" stroke="#fff" stroke-width="1.5"/><circle cx="1736.3" cy="246.9" r="4.6" fill="#b0b018" fill-opacity=".85" stroke="#101010" stroke-width="1.3"/><rect x="1397.4" y="422.9" width="14.6" height="14.6" fill="#fff" fill-opacity="0.5" stroke="#fff" stroke-width="1.5"/><rect x="1396.0" y="389.8" width="14.6" height="14.6" fill="#fff" fill-opacity="0.42" stroke="#fff" stroke-width="1.5"/><rect x="1393.1" y="358.4" width="14.6" height="14.6" fill="#fff" fill-opacity="0.35" stroke="#fff" stroke-width="1.5"/><rect x="1391.8" y="324.7" width="14.6" height="14.6" fill="#fff" fill-opacity="0.25" stroke="#fff" stroke-width="1.5"/><rect x="1388.7" y="288.5" width="14.6" height="14.6" fill="#fff" fill-opacity="0" stroke="#fff" stroke-width="1.5"/><rect x="1418.2" y="434.8" width="14.6" height="14.6" fill="#fff" fill-opacity="0.5" stroke="#fff" stroke-width="1.5"/><rect x="1435.1" y="411.7" width="14.6" height="14.6" fill="#fff" fill-opacity="0.4" stroke="#fff" stroke-width="1.5"/><rect x="1452.8" y="391.5" width="14.6" height="14.6" fill="#fff" fill-opacity="0.3" stroke="#fff" stroke-width="1.5"/><rect x="1468.8" y="370.9" width="14.6" height="14.6" fill="#fff" fill-opacity="0.2" stroke="#fff" stroke-width="1.5"/><rect x="1487.5" y="347.8" width="14.6" height="14.6" fill="#fff" fill-opacity="0" stroke="#fff" stroke-width="1.5"/><rect x="1385.4" y="457.8" width="14.6" height="14.6" fill="#fff" fill-opacity="0.5" stroke="#fff" stroke-width="1.5"/><rect x="1371.2" y="457.8" width="14.6" height="14.6" fill="#fff" fill-opacity="0.42" stroke="#fff" stroke-width="1.5"/><rect x="1356.1" y="457.8" width="14.6" height="14.6" fill="#fff" fill-opacity="0.34" stroke="#fff" stroke-width="1.5"/><rect x="1341.2" y="457.8" width="14.6" height="14.6" fill="#fff" fill-opacity="0.24" stroke="#fff" stroke-width="1.5"/><rect x="1326.7" y="457.8" width="14.6" height="14.6" fill="#fff" fill-opacity="0.1" stroke="#fff" stroke-width="1.5"/><rect x="1401.7" y="478.9" width="14.6" height="14.6" fill="#fff" fill-opacity="0.5" stroke="#fff" stroke-width="1.5"/><rect x="1402.8" y="502.5" width="14.6" height="14.6" fill="#fff" fill-opacity="0.35" stroke="#fff" stroke-width="1.5"/><rect x="1402.8" y="521.2" width="14.6" height="14.6" fill="#fff" fill-opacity="0.22" stroke="#fff" stroke-width="1.5"/><rect x="1404.6" y="543.3" width="14.6" height="14.6" fill="#fff" fill-opacity="0.1" stroke="#fff" stroke-width="1.5"/><rect x="1405.9" y="566.4" width="14.6" height="14.6" fill="#fff" fill-opacity="0" stroke="#fff" stroke-width="1.5"/><rect x="1372.8" y="491.5" width="14.6" height="14.6" fill="#fff" fill-opacity="0.5" stroke="#fff" stroke-width="1.5"/><rect x="1346.6" y="524.6" width="14.6" height="14.6" fill="#fff" fill-opacity="0.4" stroke="#fff" stroke-width="1.5"/><rect x="1320.4" y="556.4" width="14.6" height="14.6" fill="#fff" fill-opacity="0.3" stroke="#fff" stroke-width="1.5"/><rect x="1294.4" y="588.0" width="14.6" height="14.6" fill="#fff" fill-opacity="0.15" stroke="#fff" stroke-width="1.5"/><rect x="1265.1" y="624.5" width="14.6" height="14.6" fill="#fff" fill-opacity="0" stroke="#fff" stroke-width="1.5"/><rect x="1452.7" y="456.3" width="14.6" height="14.6" fill="#fff" fill-opacity="0.45" stroke="#fff" stroke-width="1.5"/><rect x="1507.6" y="456.3" width="14.6" height="14.6" fill="#fff" fill-opacity="0.3" stroke="#fff" stroke-width="1.5"/><rect x="1556.6" y="456.3" width="14.6" height="14.6" fill="#fff" fill-opacity="0.1" stroke="#fff" stroke-width="1.5"/><rect x="1608.7" y="456.3" width="14.6" height="14.6" fill="#fff" fill-opacity="0.04" stroke="#fff" stroke-width="1.5"/><rect x="1668.3" y="456.3" width="14.6" height="14.6" fill="#fff" fill-opacity="0" stroke="#fff" stroke-width="1.5"/><rect x="1400.1" y="457.8" width="14.6" height="14.6" fill="#fff" fill-opacity=".6" stroke="#000" stroke-width="1.7"/><circle cx="1407.8" cy="463.9" r="4.3" fill="#fff" stroke="#111" stroke-width="1.3"/><circle cx="1406.2" cy="430.6" r="4.5" fill="#799179" fill-opacity="0.72" stroke="#0c0c0c" stroke-width="1.3"/><circle cx="1403.1" cy="397.1" r="4.5" fill="#6e976e" fill-opacity="0.64" stroke="#0c0c0c" stroke-width="1.3"/><circle cx="1401.6" cy="365.3" r="4.5" fill="#609d60" fill-opacity="0.5700000000000001" stroke="#0c0c0c" stroke-width="1.3"/><circle cx="1400.0" cy="330.6" r="4.5" fill="#52a452" fill-opacity="0.5" stroke="#0c0c0c" stroke-width="1.3"/><circle cx="1399.1" cy="295.8" r="4.5" fill="#45ab45" fill-opacity="0.44" stroke="#0c0c0c" stroke-width="1.3"/><circle cx="1426.6" cy="442.1" r="4.5" fill="#919179" fill-opacity="0.72" stroke="#0c0c0c" stroke-width="1.3"/><circle cx="1445.3" cy="419.0" r="4.5" fill="#97976e" fill-opacity="0.64" stroke="#0c0c0c" stroke-width="1.3"/><circle cx="1462.6" cy="397.1" r="4.5" fill="#9d9d60" fill-opacity="0.5700000000000001" stroke="#0c0c0c" stroke-width="1.3"/><circle cx="1479.9" cy="376.7" r="4.5" fill="#a4a452" fill-opacity="0.5" stroke="#0c0c0c" stroke-width="1.3"/><circle cx="1497.5" cy="354.1" r="4.5" fill="#abab45" fill-opacity="0.44" stroke="#0c0c0c" stroke-width="1.3"/><circle cx="1391.6" cy="463.9" r="4.5" fill="#799191" fill-opacity="0.72" stroke="#0c0c0c" stroke-width="1.3"/><circle cx="1378.5" cy="463.9" r="4.5" fill="#6e9797" fill-opacity="0.64" stroke="#0c0c0c" stroke-width="1.3"/><circle cx="1362.8" cy="465.1" r="4.5" fill="#609d9d" fill-opacity="0.5700000000000001" stroke="#0c0c0c" stroke-width="1.3"/><circle cx="1348.2" cy="465.4" r="4.5" fill="#52a4a4" fill-opacity="0.5" stroke="#0c0c0c" stroke-width="1.3"/><circle cx="1332.8" cy="465.4" r="4.5" fill="#45abab" fill-opacity="0.44" stroke="#0c0c0c" stroke-width="1.3"/><circle cx="1409.3" cy="485.7" r="4.5" fill="#917991" fill-opacity="0.72" stroke="#0c0c0c" stroke-width="1.3"/><circle cx="1410.4" cy="507.0" r="4.5" fill="#976e97" fill-opacity="0.64" stroke="#0c0c0c" stroke-width="1.3"/><circle cx="1410.4" cy="525.8" r="4.5" fill="#9d609d" fill-opacity="0.5700000000000001" stroke="#0c0c0c" stroke-width="1.3"/><circle cx="1411.6" cy="549.0" r="4.5" fill="#a452a4" fill-opacity="0.5" stroke="#0c0c0c" stroke-width="1.3"/><circle cx="1413.2" cy="571.2" r="4.5" fill="#ab45ab" fill-opacity="0.44" stroke="#0c0c0c" stroke-width="1.3"/><circle cx="1380.1" cy="497.3" r="4.5" fill="#797991" fill-opacity="0.72" stroke="#0c0c0c" stroke-width="1.3"/><circle cx="1352.3" cy="531.9" r="4.5" fill="#6e6e97" fill-opacity="0.64" stroke="#0c0c0c" stroke-width="1.3"/><circle cx="1324.9" cy="563.5" r="4.5" fill="#60609d" fill-opacity="0.5700000000000001" stroke="#0c0c0c" stroke-width="1.3"/><circle cx="1297.3" cy="596.9" r="4.5" fill="#5252a4" fill-opacity="0.5" stroke="#0c0c0c" stroke-width="1.3"/><circle cx="1267.2" cy="632.6" r="4.5" fill="#4545ab" fill-opacity="0.44" stroke="#0c0c0c" stroke-width="1.3"/><circle cx="1461.3" cy="462.2" r="4.5" fill="#917979" fill-opacity="0.72" stroke="#0c0c0c" stroke-width="1.3"/><circle cx="1516.1" cy="462.0" r="4.5" fill="#976e6e" fill-opacity="0.64" stroke="#0c0c0c" stroke-width="1.3"/><circle cx="1568.4" cy="460.6" r="4.5" fill="#9d6060" fill-opacity="0.5700000000000001" stroke="#0c0c0c" stroke-width="1.3"/><circle cx="1624.8" cy="460.6" r="4.5" fill="#a45252" fill-opacity="0.5" stroke="#0c0c0c" stroke-width="1.3"/><circle cx="1677.0" cy="459.3" r="4.5" fill="#ab4545" fill-opacity="0.44" stroke="#0c0c0c" stroke-width="1.3"/></svg>
</body></html>
